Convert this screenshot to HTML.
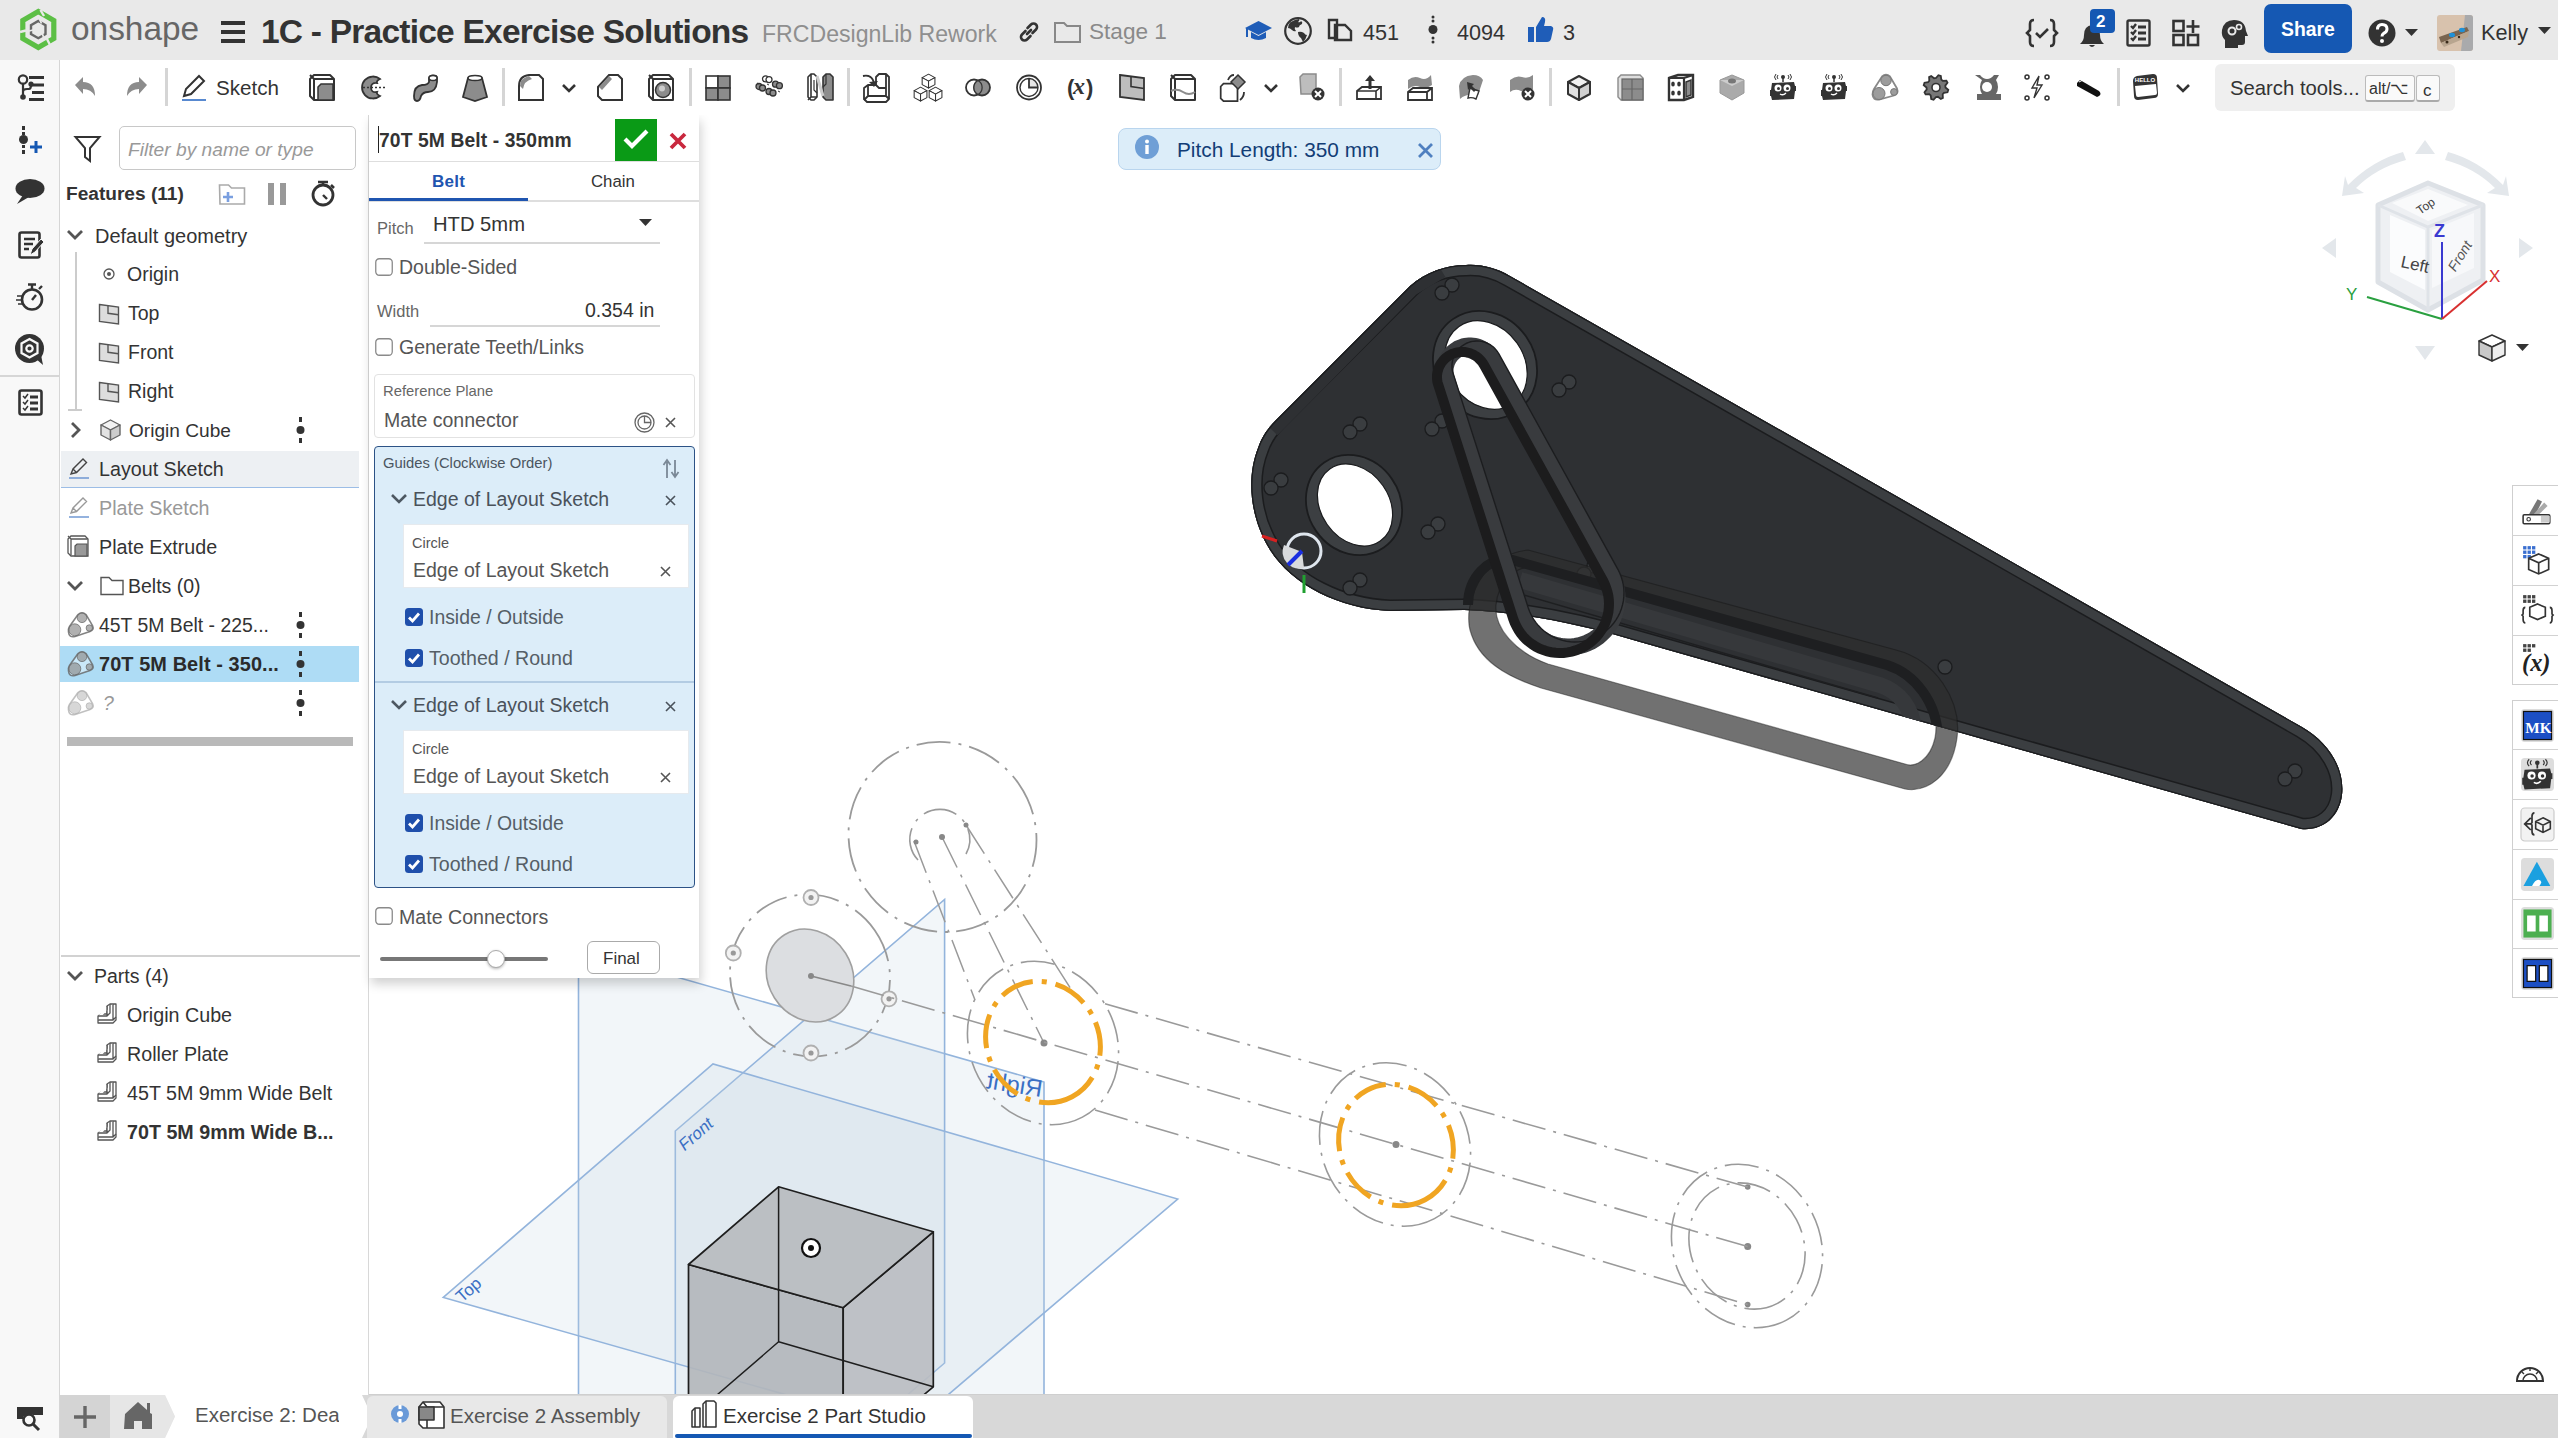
<!DOCTYPE html>
<html><head><meta charset="utf-8"><style>
*{box-sizing:border-box;margin:0;padding:0}
html,body{width:2558px;height:1438px;overflow:hidden;background:#fff;font-family:"Liberation Sans",sans-serif;color:#333}
.a{position:absolute}
.t{position:absolute;white-space:nowrap;line-height:1}
svg{position:absolute;overflow:visible}
</style></head><body>
<svg style="left:0;top:0" width="2558" height="1438" viewBox="0 0 2558 1438">
<defs><clipPath id="pc"><path d="M1466,265 C1482,264 1496,268 1510,276 L2302,727 C2330,743 2345,770 2342,795 C2339,818 2322,831 2301,829 L2000,744 L1640,642 C1580,624 1520,612 1464,610 L1390,611 C1340,609 1292,585 1270,550 C1250,518 1246,478 1258,448 C1262,436 1268,428 1276,420 L1410,286 C1426,272 1446,265 1466,265 Z"/></clipPath></defs>
<g stroke="#93b4dc" stroke-width="1.6" fill="rgba(196,212,228,0.22)"><path d="M578.5,949.0 L1044.0,1082.0 L1044.0,1600.0 L578.5,1600.0 Z"/><path d="M675.3,1131.0 L944.6,899.5 L944.6,1363.0 L675.3,1594.0 Z"/><path d="M443.3,1297.4 L713.0,1064.0 L1177.7,1199.0 L907.6,1429.3 Z"/></g>
<g fill="#3a6fc4" font-family="Liberation Sans" font-size="17"><text transform="translate(462,1303) rotate(-41)">Top</text><text transform="translate(684,1152) rotate(-41) skewX(-10)">Front</text><text transform="translate(1041,1097) scale(-1,1) rotate(-9)" font-size="24">Right</text></g>
<g stroke="#1e1e1e" stroke-width="1.7" stroke-linejoin="round"><path d="M688.5,1264.5 L843.2,1307.7 L843.2,1462.7 L688.5,1419.5 Z" fill="#b3b6ba" fill-opacity="0.9"/><path d="M843.2,1307.7 L933.3,1231.8 L933.3,1386.8 L843.2,1462.7 Z" fill="#babdc1" fill-opacity="0.9"/><path d="M778.6,1186.8 L933.3,1231.8 L843.2,1307.7 L688.5,1264.5 Z" fill="#b7babe" fill-opacity="0.9"/><path d="M778.6,1186.8 V1341.8 M688.5,1419.5 L778.6,1341.8 L933.3,1386.8" fill="none" stroke-width="1.5"/></g><circle cx="811" cy="1248" r="9" fill="#fff" stroke="#111" stroke-width="2.2"/><circle cx="811" cy="1248" r="3" fill="#111"/>
<g fill="none" stroke="#9a9a9a" stroke-width="1.8"><ellipse cx="942.5" cy="837" rx="93" ry="96" transform="rotate(-35 942.5 837)" stroke-dasharray="34 8 3 8"/><path d="M918,860 A30,30 0 1 1 966,854" stroke-dasharray="34 8 3 8" stroke-width="1.6"/><path d="M914,841 L975,1000 M942,837 L1044,1043 M966,825 L1078,1000" stroke-dasharray="34 8 3 8" stroke-width="1.5"/><ellipse cx="810" cy="975.5" rx="79" ry="82" transform="rotate(-35 810 975.5)" stroke-dasharray="34 8 3 8"/></g><ellipse cx="810" cy="975.5" rx="42" ry="48" transform="rotate(-32 810 975.5)" fill="#dcdee1" stroke="#a0a0a0" stroke-width="1.6"/><path d="M811,976 L851,986" stroke="#888" stroke-width="1.8"/><circle cx="811" cy="897.5" r="7.5" fill="#f2f2f2" stroke="#b0b0b0" stroke-width="1.8"/><circle cx="811" cy="897.5" r="2.6" fill="#999"/><circle cx="733.3" cy="953" r="7.5" fill="#f2f2f2" stroke="#b0b0b0" stroke-width="1.8"/><circle cx="733.3" cy="953" r="2.6" fill="#999"/><circle cx="889" cy="998.8" r="7.5" fill="#f2f2f2" stroke="#b0b0b0" stroke-width="1.8"/><circle cx="889" cy="998.8" r="2.6" fill="#999"/><circle cx="811" cy="1053" r="7.5" fill="#f2f2f2" stroke="#b0b0b0" stroke-width="1.8"/><circle cx="811" cy="1053" r="2.6" fill="#999"/><g fill="#888"><circle cx="811" cy="976" r="3"/><circle cx="942" cy="837" r="3"/><circle cx="916" cy="842" r="2.5"/><circle cx="966" cy="825" r="2.5"/><circle cx="1044" cy="1043" r="3.5"/><circle cx="1396" cy="1144.5" r="3.5"/><circle cx="1747.7" cy="1246.6" r="3.5"/><circle cx="1747.7" cy="1187" r="2.8"/><circle cx="1747.7" cy="1304.6" r="2.8"/></g><g fill="none" stroke="#9a9a9a" stroke-width="1.6"><path d="M851,986 L1747.7,1246.6" stroke-dasharray="34 8 3 8"/><path d="M1105,1003.8 L1747.7,1187" stroke-dasharray="34 8 3 8"/><path d="M1095,1110 L1747.7,1304.6" stroke-dasharray="34 8 3 8"/><ellipse cx="1043" cy="1043" rx="84" ry="73" transform="rotate(62 1043 1043)" stroke-dasharray="34 8 3 8"/><ellipse cx="1395" cy="1144.5" rx="84" ry="73" transform="rotate(62 1395 1144.5)" stroke-dasharray="34 8 3 8"/><ellipse cx="1747" cy="1246" rx="84" ry="73" transform="rotate(62 1747 1246)" stroke-dasharray="34 8 3 8"/><ellipse cx="1747" cy="1246" rx="65" ry="56" transform="rotate(62 1747 1246)" stroke-dasharray="34 8 3 8"/></g><g fill="none" stroke="#f0a522" stroke-width="5" stroke-dasharray="34 9 5 9"><ellipse cx="1043" cy="1042" rx="62" ry="56" transform="rotate(62 1043 1042)"/><ellipse cx="1396" cy="1145" rx="62" ry="56" transform="rotate(62 1396 1145)"/></g>
<g clip-path="url(#pc)"><path d="M1466,265 C1482,264 1496,268 1510,276 L2302,727 C2330,743 2345,770 2342,795 C2339,818 2322,831 2301,829 L2000,744 L1640,642 C1580,624 1520,612 1464,610 L1390,611 C1340,609 1292,585 1270,550 C1250,518 1246,478 1258,448 C1262,436 1268,428 1276,420 L1410,286 C1426,272 1446,265 1466,265 Z" fill="#2e3033"/><path d="M1466,265 C1482,264 1496,268 1510,276 L2302,727 C2330,743 2345,770 2342,795 C2339,818 2322,831 2301,829 L2000,744 L1640,642 C1580,624 1520,612 1464,610 L1390,611 C1340,609 1292,585 1270,550 C1250,518 1246,478 1258,448 C1262,436 1268,428 1276,420 L1410,286 C1426,272 1446,265 1466,265 Z" fill="none" stroke="#1b1c1e" stroke-width="23"/><path d="M1466,265 C1482,264 1496,268 1510,276 L2302,727 C2330,743 2345,770 2342,795 C2339,818 2322,831 2301,829 L2000,744 L1640,642 C1580,624 1520,612 1464,610 L1390,611 C1340,609 1292,585 1270,550 C1250,518 1246,478 1258,448 C1262,436 1268,428 1276,420 L1410,286 C1426,272 1446,265 1466,265 Z" fill="none" stroke="#3b3e41" stroke-width="20"/><path d="M1440,268 L1410,286 L1270,428" fill="none" stroke="#2e3033" stroke-width="21"/><path d="M1466,265 C1482,264 1496,268 1510,276 L2302,727 C2330,743 2345,770 2342,795 C2339,818 2322,831 2301,829 L2000,744 L1640,642 C1580,624 1520,612 1464,610 L1390,611 C1340,609 1292,585 1270,550 C1250,518 1246,478 1258,448 C1262,436 1268,428 1276,420 L1410,286 C1426,272 1446,265 1466,265 Z" fill="none" stroke="#1b1c1e" stroke-width="2.5"/></g><ellipse cx="1354" cy="505" rx="52" ry="46" transform="rotate(55 1354 505)" fill="#3c3f42" stroke="#1b1c1e" stroke-width="1.8"/><ellipse cx="1355" cy="505" rx="44" ry="34" transform="rotate(55 1355 505)" fill="#fff" stroke="#1b1c1e" stroke-width="1.2"/><ellipse cx="1485" cy="365" rx="56" ry="50" transform="rotate(55 1485 365)" fill="#3c3f42" stroke="#1b1c1e" stroke-width="1.8"/><ellipse cx="1486" cy="365" rx="47" ry="38" transform="rotate(55 1486 365)" fill="#fff" stroke="#1b1c1e" stroke-width="1.2"/><g fill="#3a3d40" stroke="#1b1c1e" stroke-width="1.3"><circle cx="1452" cy="285" r="7"/><circle cx="1442" cy="293" r="7"/></g><g fill="#3a3d40" stroke="#1b1c1e" stroke-width="1.3"><circle cx="1569" cy="382" r="7"/><circle cx="1559" cy="390" r="7"/></g><g fill="#3a3d40" stroke="#1b1c1e" stroke-width="1.3"><circle cx="1360" cy="424" r="7"/><circle cx="1350" cy="432" r="7"/></g><g fill="#3a3d40" stroke="#1b1c1e" stroke-width="1.3"><circle cx="1281" cy="480" r="7"/><circle cx="1271" cy="488" r="7"/></g><g fill="#3a3d40" stroke="#1b1c1e" stroke-width="1.3"><circle cx="1438" cy="524" r="7"/><circle cx="1428" cy="532" r="7"/></g><g fill="#3a3d40" stroke="#1b1c1e" stroke-width="1.3"><circle cx="1360" cy="580" r="7"/><circle cx="1350" cy="588" r="7"/></g><g fill="#3a3d40" stroke="#1b1c1e" stroke-width="1.3"><circle cx="1442" cy="421" r="7"/><circle cx="1432" cy="429" r="7"/></g><g fill="#3a3d40" stroke="#1b1c1e" stroke-width="1.3"><circle cx="2295" cy="771" r="7"/><circle cx="2285" cy="779" r="7"/></g><g fill="#3a3d40" stroke="#1b1c1e" stroke-width="1.3"><circle cx="1594" cy="566" r="7"/><circle cx="1584" cy="574" r="7"/></g><circle cx="1945" cy="667" r="7" fill="#3a3d40" stroke="#1b1c1e" stroke-width="1.3"/><circle cx="1304" cy="551" r="17" fill="#2e3033" stroke="#dfe6ee" stroke-width="3"/><path d="M1302,552 L1284,545 A17,17 0 0,0 1304,568 Z" fill="#d8dadc"/><path d="M1302,551 L1288,565" stroke="#1a2ee0" stroke-width="4"/><path d="M1262,536 l15,5" stroke="#d82020" stroke-width="3"/><path d="M1304,575 v18" stroke="#20a030" stroke-width="3"/><clipPath id="b2"><path d="M1528,550 L1896,650 C1935,660 1962,700 1957,738 C1952,775 1928,793 1905,789 L1541,688 C1505,676 1478,660 1470,630 C1464,606 1478,556 1528,550 Z M1535,568 L1892,666 C1925,676 1940,712 1935,738 C1930,760 1915,768 1905,764 L1548,664 C1515,652 1494,628 1496,605 C1498,583 1515,564 1535,568 Z" clip-rule="evenodd"/></clipPath><path d="M1528,550 L1896,650 C1935,660 1962,700 1957,738 C1952,775 1928,793 1905,789 L1541,688 C1505,676 1478,660 1470,630 C1464,606 1478,556 1528,550 Z M1535,568 L1892,666 C1925,676 1940,712 1935,738 C1930,760 1915,768 1905,764 L1548,664 C1515,652 1494,628 1496,605 C1498,583 1515,564 1535,568 Z" fill-rule="evenodd" fill="rgba(45,45,45,0.68)" stroke="rgba(20,20,20,0.45)" stroke-width="1.2"/><g clip-path="url(#pc)"><path d="M1468,605 C1468,578 1488,556 1512,560 L1887,665 C1915,674 1937,702 1938,738" fill="none" stroke="#1e1f21" stroke-width="10"/><path d="M1520,580 L1880,685 C1900,692 1912,708 1914,730" fill="none" stroke="#36383b" stroke-width="16"/><path d="M1510,591 L1878,698" fill="none" stroke="#1e1f21" stroke-width="1.4"/></g><path d="M1610.9,574.3 L1612.7,578.0 L1614.2,581.8 L1615.4,585.7 L1616.3,589.7 L1616.8,593.7 L1617.0,597.8 L1616.8,601.9 L1616.4,605.9 L1615.5,609.9 L1614.4,613.8 L1612.9,617.7 L1611.1,621.3 L1609.0,624.8 L1606.6,628.2 L1604.0,631.3 L1601.1,634.1 L1598.0,636.8 L1594.6,639.1 L1591.1,641.2 L1587.4,643.0 L1583.6,644.4 L1579.7,645.6 L1575.7,646.4 L1571.6,646.9 L1567.5,647.0 L1563.5,646.8 L1559.4,646.2 L1555.4,645.4 L1551.5,644.1 L1547.7,642.6 L1544.1,640.8 L1540.6,638.6 L1537.3,636.2 L1534.2,633.5 L1531.4,630.6 L1528.8,627.4 L1526.5,624.1 L1524.5,620.5 L1522.7,616.8 L1521.3,613.0 L1446.2,378.6 L1445.7,376.9 L1445.3,375.1 L1445.1,373.2 L1445.0,371.4 L1445.0,369.5 L1445.2,367.7 L1445.5,365.9 L1446.0,364.1 L1446.5,362.4 L1447.2,360.7 L1448.1,359.0 L1449.0,357.4 L1450.1,355.9 L1451.2,354.5 L1452.5,353.2 L1453.9,351.9 L1455.3,350.8 L1456.8,349.8 L1458.4,348.8 L1460.1,348.0 L1461.8,347.4 L1463.6,346.8 L1465.4,346.4 L1467.2,346.2 L1469.0,346.0 L1470.9,346.0 L1472.7,346.1 L1474.5,346.4 L1476.3,346.8 L1478.1,347.3 L1479.8,348.0 L1481.5,348.8 L1483.1,349.7 L1484.6,350.7 L1486.1,351.8 L1487.4,353.1 L1488.7,354.4 L1489.9,355.8 L1490.9,357.3 L1491.9,358.9 Z" fill="none" stroke="#393b3e" stroke-width="17"/><path d="M1617.9,569.3 L1619.7,573.0 L1621.2,576.8 L1622.4,580.7 L1623.3,584.7 L1623.8,588.7 L1624.0,592.8 L1623.8,596.9 L1623.4,600.9 L1622.5,604.9 L1621.4,608.8 L1619.9,612.7 L1618.1,616.3 L1616.0,619.8 L1613.6,623.2 L1611.0,626.3 L1608.1,629.1 L1605.0,631.8 L1601.6,634.1 L1598.1,636.2 L1594.4,638.0 L1590.6,639.4 L1586.7,640.6 L1582.7,641.4 L1578.6,641.9 L1574.5,642.0 L1570.5,641.8 L1566.4,641.2 L1562.4,640.4 L1558.5,639.1 L1554.7,637.6 L1551.1,635.8 L1547.6,633.6 L1544.3,631.2 L1541.2,628.5 L1538.4,625.6 L1535.8,622.4 L1533.5,619.1 L1531.5,615.5 L1529.7,611.8 L1528.3,608.0 L1453.2,373.6 L1452.7,371.9 L1452.3,370.1 L1452.1,368.2 L1452.0,366.4 L1452.0,364.5 L1452.2,362.7 L1452.5,360.9 L1453.0,359.1 L1453.5,357.4 L1454.2,355.7 L1455.1,354.0 L1456.0,352.4 L1457.1,350.9 L1458.2,349.5 L1459.5,348.2 L1460.9,346.9 L1462.3,345.8 L1463.8,344.8 L1465.4,343.8 L1467.1,343.0 L1468.8,342.4 L1470.6,341.8 L1472.4,341.4 L1474.2,341.2 L1476.0,341.0 L1477.9,341.0 L1479.7,341.1 L1481.5,341.4 L1483.3,341.8 L1485.1,342.3 L1486.8,343.0 L1488.5,343.8 L1490.1,344.7 L1491.6,345.7 L1493.1,346.8 L1494.4,348.1 L1495.7,349.4 L1496.9,350.8 L1497.9,352.3 L1498.9,353.9 Z" fill="none" stroke="#1c1d1f" stroke-width="1.4"/><path d="M1602.9,580.3 L1604.7,584.0 L1606.2,587.8 L1607.4,591.7 L1608.3,595.7 L1608.8,599.7 L1609.0,603.8 L1608.8,607.9 L1608.4,611.9 L1607.5,615.9 L1606.4,619.8 L1604.9,623.7 L1603.1,627.3 L1601.0,630.8 L1598.6,634.2 L1596.0,637.3 L1593.1,640.1 L1590.0,642.8 L1586.6,645.1 L1583.1,647.2 L1579.4,649.0 L1575.6,650.4 L1571.7,651.6 L1567.7,652.4 L1563.6,652.9 L1559.5,653.0 L1555.5,652.8 L1551.4,652.2 L1547.4,651.4 L1543.5,650.1 L1539.7,648.6 L1536.1,646.8 L1532.6,644.6 L1529.3,642.2 L1526.2,639.5 L1523.4,636.6 L1520.8,633.4 L1518.5,630.1 L1516.5,626.5 L1514.7,622.8 L1513.3,619.0 L1438.2,384.6 L1437.7,382.9 L1437.3,381.1 L1437.1,379.2 L1437.0,377.4 L1437.0,375.5 L1437.2,373.7 L1437.5,371.9 L1438.0,370.1 L1438.5,368.4 L1439.2,366.7 L1440.1,365.0 L1441.0,363.4 L1442.1,361.9 L1443.2,360.5 L1444.5,359.2 L1445.9,357.9 L1447.3,356.8 L1448.8,355.8 L1450.4,354.8 L1452.1,354.0 L1453.8,353.4 L1455.6,352.8 L1457.4,352.4 L1459.2,352.2 L1461.0,352.0 L1462.9,352.0 L1464.7,352.1 L1466.5,352.4 L1468.3,352.8 L1470.1,353.3 L1471.8,354.0 L1473.5,354.8 L1475.1,355.7 L1476.6,356.7 L1478.1,357.8 L1479.4,359.1 L1480.7,360.4 L1481.9,361.8 L1482.9,363.3 L1483.9,364.9 Z" fill="none" stroke="#1c1c1d" stroke-width="10"/></svg>
<svg style="left:2320px;top:135px;" width="220" height="230" viewBox="0 0 220 230"><g fill="#e3e7eb"><path d="M105 5 l10 14 h-20z"/><path d="M105 225 l10 -14 h-20z" /><path d="M2 113 l14 -10 v20z"/><path d="M213 113 l-14 -10 v20z"/><path d="M28 50 q25 -25 55 -33 l3 8 q-30 8 -50 28 l8 5 l-22 3 l3 -20z"/><path d="M183 50 q-25 -25 -55 -33 l-3 8 q30 8 50 28 l-8 5 l22 3 l-3 -20z"/></g><g fill="#eef0f3" stroke="#dde1e6" stroke-width="5" stroke-linejoin="round"><path d="M58 70 l50 -22 l55 22 v75 l-55 30 l-50 -28z"/></g><path d="M58 70 l50 22 l55 -22 M108 92 v83" fill="none" stroke="#dfe3e8" stroke-width="3"/><path d="M70 80 l35 15 v60 l-35 -18z" fill="#fbfcfd"/><path d="M112 95 l42 -17 v55 l-42 20z" fill="#f7f8fa"/><path d="M72 68 l36 -14 l40 16 l-40 16z" fill="#f9fafb"/><g font-family="Liberation Sans" fill="#444"><text transform="translate(80,132) rotate(12)" font-size="17">Left</text><text transform="translate(135,138) rotate(-58) skewX(-10)" font-size="14" fill="#555">Front</text><text transform="translate(100,80) rotate(-35)" font-size="12">Top</text></g><path d="M122 184 L122 107" stroke="#3a3ad0" stroke-width="2"/><text x="114" y="102" font-family="Liberation Sans" font-size="18" font-weight="700" fill="#3a3ad0">Z</text><path d="M122 184 L47 162" stroke="#2aa040" stroke-width="2"/><text x="26" y="165" font-family="Liberation Sans" font-size="17" fill="#2aa040">Y</text><path d="M122 184 L167 146" stroke="#d83030" stroke-width="2"/><text x="169" y="147" font-family="Liberation Sans" font-size="17" fill="#d83030">X</text></svg>
<svg style="left:2478px;top:334px;" width="28" height="28" viewBox="0 0 28 28"><g stroke="#333" stroke-width="1.4" stroke-linejoin="round"><polygon points="14,1 27,7 14,13 1,7" fill="#fff"/><polygon points="1,7 14,13 14,27 1,21" fill="#c8c8c8"/><polygon points="14,13 27,7 27,21 14,27" fill="#eee"/></g></svg>
<svg style="left:2516px;top:344px;" width="13" height="7" viewBox="0 0 13 7"><path d="M0 0 h13 l-6.5 7z" fill="#333"/></svg>
<div class="a" style="left:2512px;top:485px;width:46px;height:200px;background:#fff;border:1.3px solid #cfcfcf;border-right:none"></div>
<div class="a" style="left:2512px;top:535px;width:46px;height:1.2px;background:#d2d2d2"></div>
<div class="a" style="left:2512px;top:585px;width:46px;height:1.2px;background:#d2d2d2"></div>
<div class="a" style="left:2512px;top:635px;width:46px;height:1.2px;background:#d2d2d2"></div>
<div class="a" style="left:2512px;top:700px;width:46px;height:298px;background:#fff;border:1.3px solid #cfcfcf;border-right:none"></div>
<div class="a" style="left:2512px;top:749px;width:46px;height:1.2px;background:#d2d2d2"></div>
<div class="a" style="left:2512px;top:799px;width:46px;height:1.2px;background:#d2d2d2"></div>
<div class="a" style="left:2512px;top:849px;width:46px;height:1.2px;background:#d2d2d2"></div>
<div class="a" style="left:2512px;top:899px;width:46px;height:1.2px;background:#d2d2d2"></div>
<div class="a" style="left:2512px;top:948px;width:46px;height:1.2px;background:#d2d2d2"></div>
<svg style="left:2522.0px;top:497.0px" width="30" height="30" viewBox="0 0 27 27"><path d="M6 16 l8 -14 l4 2 l-6 12z" fill="#777"/><path d="M10 16 l10 -11 l3 3 l-8 8z" fill="#aaa"/><rect x="1" y="16" width="24" height="8" rx="1" fill="#fff" stroke="#333" stroke-width="1.4"/><circle cx="6" cy="20" r="1.6" fill="none" stroke="#333"/><rect x="17" y="17" width="8" height="6" fill="#ccc"/></svg><svg style="left:2522.0px;top:545.0px" width="30" height="30" viewBox="0 0 27 27"><g fill="#3a6fd0"><rect x="1" y="1" width="3" height="3"/><rect x="5" y="1" width="3" height="3"/><rect x="9" y="1" width="3" height="3"/><rect x="1" y="5" width="3" height="3"/><rect x="5" y="5" width="3" height="3"/><rect x="9" y="5" width="3" height="3"/><rect x="1" y="9" width="3" height="3"/><rect x="5" y="9" width="3" height="3"/></g><g fill="none" stroke="#333" stroke-width="1.5"><path d="M15 8 l9 4 v10 l-9 4 l-9 -4 v-10z M6 12 l9 4 l9 -4 M15 16 v10"/></g></svg><svg style="left:2522.0px;top:594.0px" width="30" height="30" viewBox="0 0 27 27"><g fill="#444"><rect x="1" y="1" width="3" height="3"/><rect x="5" y="1" width="3" height="3"/><rect x="9" y="1" width="3" height="3"/><rect x="1" y="5" width="3" height="3"/><rect x="5" y="5" width="3" height="3"/><rect x="9" y="5" width="3" height="3"/></g><g fill="none" stroke="#333" stroke-width="1.5"><path d="M14 9 l7 3 v8 l-7 3 l-7 -3 v-8z"/><path d="M3 12 q-2 0 -2 3 v3 l-1 1 l1 1 v3 q0 3 2 3 M25 12 q2 0 2 3 v3 l1 1 l-1 1 v3 q0 3 -2 3"/></g></svg><svg style="left:2522.0px;top:643.0px" width="30" height="30" viewBox="0 0 27 27"><g fill="#444"><rect x="1" y="1" width="3" height="3"/><rect x="5" y="1" width="3" height="3"/><rect x="9" y="1" width="3" height="3"/><rect x="1" y="5" width="3" height="3"/><rect x="5" y="5" width="3" height="3"/></g><text x="0" y="25" font-family="Liberation Serif" font-style="italic" font-weight="700" font-size="22" fill="#222">(x)</text></svg><svg style="left:2520.5px;top:708.5px" width="33" height="33" viewBox="0 0 27 27"><rect x="0" y="0" width="27" height="27" rx="3" fill="#ddd"/><rect x="2" y="2" width="23" height="23" fill="#1c4fc4" stroke="#111" stroke-width="1"/><text x="3.5" y="20" font-family="Liberation Serif" font-weight="700" font-size="12.5" fill="#fff">MK</text></svg><svg style="left:2520.5px;top:757.5px" width="33" height="33" viewBox="0 0 27 27"><rect x="0" y="0" width="27" height="27" rx="3" fill="#ddd"/><g transform="translate(1,1) scale(0.95)"><g><path d="M8 1 q-2 2 0 4 M18 1 q2 2 0 4 M6 0 q-3 3 0 6 M20 0 q3 3 0 6" fill="none" stroke="#333" stroke-width="1"/><circle cx="13" cy="3" r="2" fill="#333"/><path d="M13 3 v5" stroke="#333" stroke-width="1.5"/><path d="M2 9 l22 -1 l1 4 h1 v5 h-1 l-1 8 l-22 1 l-1 -4 h-1 v-6 h1z" fill="#333"/><circle cx="8" cy="14" r="3.5" fill="#fff"/><circle cx="17" cy="14" r="3.5" fill="#fff"/><circle cx="8.5" cy="14.5" r="1.5" fill="#333"/><circle cx="17.5" cy="14.5" r="1.5" fill="#333"/><path d="M10 20 q3 2 6 -1" stroke="#fff" stroke-width="1.4" fill="none"/></g></g></svg><svg style="left:2520.5px;top:807.5px" width="33" height="33" viewBox="0 0 27 27"><rect x="0" y="0" width="27" height="27" rx="3" fill="#f2f2f2" stroke="#ccc"/><path d="M8 8 l-5 5 l5 5 M3 13 h6 M11 4 q-2 0 -2 3 v5 l-1 1 l1 1 v5 q0 3 2 3" fill="none" stroke="#333" stroke-width="1.4"/><path d="M18 8 l6 3 v6 l-6 3 l-6 -3 v-6z M12 11 l6 3 l6 -3 M18 14 v6" fill="none" stroke="#333" stroke-width="1.3"/></svg><svg style="left:2520.5px;top:857.5px" width="33" height="33" viewBox="0 0 27 27"><rect x="0" y="0" width="27" height="27" rx="3" fill="#ddd"/><path d="M13 3 l11 20 h-22z" fill="#1ba0e0"/><path d="M9 23 q3 -6 6 -5 q3 1 0 5z" fill="#fff"/></svg><svg style="left:2520.5px;top:906.5px" width="33" height="33" viewBox="0 0 27 27"><rect x="0" y="0" width="27" height="27" rx="3" fill="#ddd"/><rect x="2" y="2" width="23" height="23" fill="#4caf50"/><path d="M5 7 h7 v13 h-7z M15 7 h7 v13 h-7z" fill="#fff"/></svg><svg style="left:2520.5px;top:956.5px" width="33" height="33" viewBox="0 0 27 27"><rect x="0" y="0" width="27" height="27" rx="3" fill="#ddd"/><rect x="2" y="2" width="23" height="23" fill="#1c4fc4" stroke="#111"/><path d="M5 7 h7 v13 h-7z M15 7 h7 v13 h-7z" fill="#fff" stroke="#111" stroke-width="1"/></svg><svg style="left:2515px;top:1363px;" width="30" height="20" viewBox="0 0 30 20"><path d="M2 18 a13 13 0 0 1 26 0z" fill="none" stroke="#333" stroke-width="2"/><path d="M8 18 a7 7 0 0 1 14 0" fill="none" stroke="#333" stroke-width="1.6"/><path d="M15 5 v3 M7 9 l2 2 M23 9 l-2 2" stroke="#333" stroke-width="1.4"/></svg>
<div class="a" style="left:1118px;top:128px;width:323px;height:42px;background:#dcedf9;border:1.3px solid #b9d5ee;border-radius:8px"></div>
<svg style="left:1135px;top:135px;" width="24" height="24" viewBox="0 0 24 24"><circle cx="12" cy="12" r="12" fill="#6f9fd6"/><circle cx="12" cy="6.5" r="2" fill="#fff"/><rect x="10.3" y="10" width="3.4" height="9" fill="#fff"/></svg>
<div class="t" style="left:1177.0px;top:140.0px;font-size:20.8px;font-weight:400;color:#123d76;font-style:normal;">Pitch Length: 350 mm</div>
<svg style="left:1418px;top:143px;" width="15" height="15" viewBox="0 0 15 15"><path d="M1 1 L14 14 M14 1 L1 14" stroke="#4f80c0" stroke-width="2.8"/></svg>
<div class="a" style="left:60px;top:1394px;width:2498px;height:44px;background:#d8d8d8;border-top:1px solid #cfcfcf"></div>
<div class="a" style="left:60px;top:1395px;width:50px;height:43px;background:#d4d4d4"></div>
<svg style="left:73px;top:1405px;" width="24" height="24" viewBox="0 0 24 24"><path d="M12 1 v22 M1 12 h22" stroke="#666" stroke-width="3.4"/></svg>
<svg style="left:110px;top:1395px;" width="260" height="43" viewBox="0 0 260 43"><path d="M0 0 h55 l10 21.5 l-10 21.5 h-55z" fill="#e6e6e6"/><path d="M55 0 h197 l10 21.5 l-10 21.5 h-197 l10 -21.5z" fill="#fff"/></svg>
<svg style="left:124px;top:1400px;" width="28" height="28" viewBox="0 0 28 28"><path d="M1 14 l13 -12 l9 8 v-7 h3 v10 l2 1 v15 h-10 v-8 h-8 v8 h-10z" fill="#666"/></svg>
<div class="t" style="left:195.0px;top:1405.1px;font-size:20.5px;font-weight:400;color:#555;font-style:normal;width:144px;overflow:hidden">Exercise 2: Dear</div>
<div class="a" style="left:367px;top:1396px;width:300px;height:42px;background:#e8e8e8;border-radius:6px 6px 0 0"></div>
<svg style="left:390px;top:1404px;" width="20" height="20" viewBox="0 0 20 20"><circle cx="10" cy="10" r="9" fill="#6a9ad8"/><circle cx="10" cy="10" r="3" fill="#fff"/><rect x="8.5" y="1" width="3" height="4" fill="#fff"/><rect x="8.5" y="15" width="3" height="4" fill="#fff"/></svg>
<svg style="left:417px;top:1401px;" width="28" height="28" viewBox="0 0 28 28"><g stroke="#333" stroke-width="1.6" stroke-linejoin="round"><path d="M2 6 l4 -5 h17 l4 5 v21 h-21 l-4 -4z" fill="#fff"/><path d="M6 1 l4 5 h17 M10 6 v21" fill="none"/><path d="M2 6 h15 v13 h-15z" fill="#888"/></g></svg>
<div class="t" style="left:450.0px;top:1406.1px;font-size:20.6px;font-weight:400;color:#555;font-style:normal;">Exercise 2 Assembly</div>
<div class="a" style="left:673px;top:1396px;width:300px;height:42px;background:#fff;border-radius:6px 6px 0 0"></div>
<div class="a" style="left:675px;top:1434px;width:297px;height:4px;background:#1558b3;border-radius:2px"></div>
<svg style="left:691px;top:1400px;" width="26" height="28" viewBox="0 0 26 28"><g fill="#fff" stroke="#333" stroke-width="1.5" stroke-linejoin="round"><path d="M1 11 l3 -3 h5 v19 h-8z"/><path d="M4 8 v19"/><path d="M12 4 l3 -3 h8 l2 2 v24 h-13z"/><path d="M15 1 v26"/></g></svg>
<div class="t" style="left:723.0px;top:1406.1px;font-size:20.5px;font-weight:400;color:#333;font-style:normal;">Exercise 2 Part Studio</div>
<div class="a" style="left:60px;top:114px;width:309px;height:1281px;background:#fff;border-right:1.5px solid #d8d8d8;border-top:1.5px solid #d6d6d6"></div>
<svg style="left:74px;top:135px;" width="27" height="28" viewBox="0 0 27 28"><path d="M1.5 2 h24 l-9.5 11 v13 l-5 -4 v-9z" fill="none" stroke="#333" stroke-width="2"/></svg>
<div class="a" style="left:119px;top:126px;width:237px;height:44px;border:1.5px solid #c8c8c8;border-radius:5px;background:#fff"></div>
<div class="t" style="left:128.0px;top:139.7px;font-size:19.2px;font-weight:400;color:#999;font-style:italic;">Filter by name or type</div>
<div class="t" style="left:66.0px;top:183.8px;font-size:19.1px;font-weight:700;color:#333;font-style:normal;">Features (11)</div>
<svg style="left:218px;top:183px;" width="29" height="23" viewBox="0 0 29 23"><path d="M1.5 2 h9 l3 3 h13 v16 h-24.5z" fill="none" stroke="#aaa" stroke-width="1.6"/><path d="M10 9 v10 M5 14 h10" stroke="#7a9fe0" stroke-width="2.6"/></svg>
<div class="a" style="left:268px;top:183px;width:6px;height:22px;background:#999"></div>
<div class="a" style="left:280px;top:183px;width:6px;height:22px;background:#999"></div>
<svg style="left:310px;top:180px;" width="26" height="27" viewBox="0 0 26 27"><circle cx="13" cy="15" r="10" fill="none" stroke="#333" stroke-width="2.8"/><path d="M8 2 h10 M13 2 v3 M21 5 l3 3" stroke="#333" stroke-width="2.6"/><path d="M13 15 l4 4" stroke="#333" stroke-width="2.4"/></svg>
<svg style="left:66px;top:229px;" width="18" height="11" viewBox="0 0 18 11"><path d="M2 2 l7 7 l7 -7" fill="none" stroke="#555" stroke-width="2.8"/></svg>
<div class="t" style="left:95.0px;top:225.9px;font-size:20px;font-weight:400;color:#333;font-style:normal;">Default geometry</div>
<div class="a" style="left:75px;top:252px;width:1.5px;height:158px;background:#ccc"></div>
<div class="a" style="left:68px;top:409px;width:14px;height:1.5px;background:#ccc"></div>
<svg style="left:103px;top:268px;" width="12" height="12" viewBox="0 0 12 12"><circle cx="6" cy="6" r="5" fill="none" stroke="#555" stroke-width="1.3"/><circle cx="6" cy="6" r="2" fill="#555"/></svg>
<div class="t" style="left:127.0px;top:265.1px;font-size:19.5px;font-weight:400;color:#333;font-style:normal;">Origin</div>
<svg style="left:98px;top:302.5px;" width="22" height="22" viewBox="0 0 22 22"><path d="M1.5 1.5 l19 2.5 v17 l-19 -2.5z" fill="#ddd" stroke="#555" stroke-width="1.4"/><path d="M10 2.8 v7.5 l10.5 1.4" fill="none" stroke="#555" stroke-width="1.4"/></svg>
<div class="t" style="left:128.0px;top:304.1px;font-size:19.5px;font-weight:400;color:#333;font-style:normal;">Top</div>
<svg style="left:98px;top:341.5px;" width="22" height="22" viewBox="0 0 22 22"><path d="M1.5 1.5 l19 2.5 v17 l-19 -2.5z" fill="#ddd" stroke="#555" stroke-width="1.4"/><path d="M10 2.8 v7.5 l10.5 1.4" fill="none" stroke="#555" stroke-width="1.4"/></svg>
<div class="t" style="left:128.0px;top:343.1px;font-size:19.5px;font-weight:400;color:#333;font-style:normal;">Front</div>
<svg style="left:98px;top:380.5px;" width="22" height="22" viewBox="0 0 22 22"><path d="M1.5 1.5 l19 2.5 v17 l-19 -2.5z" fill="#ddd" stroke="#555" stroke-width="1.4"/><path d="M10 2.8 v7.5 l10.5 1.4" fill="none" stroke="#555" stroke-width="1.4"/></svg>
<div class="t" style="left:128.0px;top:382.1px;font-size:19.5px;font-weight:400;color:#333;font-style:normal;">Right</div>
<svg style="left:70px;top:421px;" width="11" height="18" viewBox="0 0 11 18"><path d="M2 2 l7 7 l-7 7" fill="none" stroke="#555" stroke-width="2.8"/></svg>
<svg style="left:100px;top:419px;" width="21" height="22" viewBox="0 0 21 22"><g stroke="#666" stroke-width="1.4" stroke-linejoin="round"><polygon points="10.5,1 20,6 10.5,11 1,6" fill="#f2f2f2"/><polygon points="1,6 10.5,11 10.5,21 1,16" fill="#e2e2e2"/><polygon points="10.5,11 20,6 20,16 10.5,21" fill="#ccc"/></g></svg>
<div class="t" style="left:129.0px;top:421.3px;font-size:19.1px;font-weight:400;color:#333;font-style:normal;">Origin Cube</div>
<svg style="left:297px;top:417px;" width="7" height="26" viewBox="0 0 7 26"><g fill="#333"><rect x="2" y="0" width="3" height="5"/><circle cx="3.5" cy="13" r="4"/><rect x="2" y="21" width="3" height="5"/></g></svg>
<div class="a" style="left:61px;top:451px;width:298px;height:37px;background:#edf0f3;border-bottom:1.5px solid #9cbde6"></div>
<svg style="left:68px;top:457px;" width="22" height="22" viewBox="0 0 22 22"><path d="M3 17 l2 -5 l10 -10 l3.5 3.5 l-10 10z M5 12 l3.5 3.5" fill="none" stroke="#444" stroke-width="1.4"/><path d="M1 21 h20" stroke="#5a88cc" stroke-width="1.3"/></svg>
<div class="t" style="left:99.0px;top:460.0px;font-size:19.7px;font-weight:400;color:#333;font-style:normal;">Layout Sketch</div>
<svg style="left:68px;top:496px;" width="22" height="22" viewBox="0 0 22 22"><path d="M3 17 l2 -5 l10 -10 l3.5 3.5 l-10 10z M5 12 l3.5 3.5" fill="none" stroke="#999" stroke-width="1.4"/><path d="M1 21 h20" stroke="#5a88cc" stroke-width="1.3"/></svg>
<div class="t" style="left:99.0px;top:499.0px;font-size:19.7px;font-weight:400;color:#999;font-style:normal;">Plate Sketch</div>
<svg style="left:67px;top:535px;" width="22" height="22" viewBox="0 0 22 22"><g stroke="#555" stroke-width="1.3" fill="#fff"><path d="M1 4 l3 -3 h14 l3 3 v17 h-17 l-3 -3z"/><path d="M4 21 v-17 h17 M4 4 l-3 -3"/></g><path d="M8 11 l2 -2 h10 v12 h-12z" fill="#999" stroke="#555" stroke-width="1.2"/></svg>
<div class="t" style="left:99.0px;top:538.0px;font-size:19.7px;font-weight:400;color:#333;font-style:normal;">Plate Extrude</div>
<svg style="left:66px;top:580px;" width="18" height="11" viewBox="0 0 18 11"><path d="M2 2 l7 7 l7 -7" fill="none" stroke="#555" stroke-width="2.8"/></svg>
<svg style="left:100px;top:576px;" width="24" height="20" viewBox="0 0 24 20"><path d="M1 1.5 h8 l3 3 h11 v14 h-22z" fill="none" stroke="#555" stroke-width="1.4"/></svg>
<div class="t" style="left:128.0px;top:577.1px;font-size:19.5px;font-weight:400;color:#333;font-style:normal;">Belts (0)</div>
<svg style="left:68px;top:611.5px;" width="25" height="25" viewBox="0 0 25 25"><g opacity="1"><path d="M10 2.5 q4 -3.5 8 0 l6.5 11 q2 4.5 -2.5 6 l-15 5 q-6 1.5 -6.5 -4.5 q-0.5 -3 1 -5.5z" fill="rgba(255,255,255,0.35)" stroke="rgba(100,100,100,0.8)" stroke-width="1.6"/><circle cx="14" cy="5.8" r="4.8" fill="rgba(140,140,140,0.68)" stroke="rgba(100,100,100,0.7)" stroke-width="1"/><circle cx="6.8" cy="17.8" r="6" fill="rgba(140,140,140,0.68)" stroke="rgba(100,100,100,0.7)" stroke-width="1"/><circle cx="21.3" cy="16" r="3.2" fill="rgba(140,140,140,0.68)" stroke="rgba(100,100,100,0.7)" stroke-width="1"/></g></svg>
<div class="t" style="left:99.0px;top:616.1px;font-size:19.4px;font-weight:400;color:#333;font-style:normal;">45T 5M Belt - 225...</div>
<svg style="left:297px;top:612px;" width="7" height="26" viewBox="0 0 7 26"><g fill="#333"><rect x="2" y="0" width="3" height="5"/><circle cx="3.5" cy="13" r="4"/><rect x="2" y="21" width="3" height="5"/></g></svg>
<div class="a" style="left:60px;top:646px;width:299px;height:36px;background:#aedcf5"></div>
<svg style="left:68px;top:650.5px;" width="25" height="25" viewBox="0 0 25 25"><g opacity="1"><path d="M10 2.5 q4 -3.5 8 0 l6.5 11 q2 4.5 -2.5 6 l-15 5 q-6 1.5 -6.5 -4.5 q-0.5 -3 1 -5.5z" fill="rgba(255,255,255,0.35)" stroke="rgba(100,100,100,0.8)" stroke-width="1.6"/><circle cx="14" cy="5.8" r="4.8" fill="rgba(140,140,140,0.68)" stroke="rgba(100,100,100,0.7)" stroke-width="1"/><circle cx="6.8" cy="17.8" r="6" fill="rgba(140,140,140,0.68)" stroke="rgba(100,100,100,0.7)" stroke-width="1"/><circle cx="21.3" cy="16" r="3.2" fill="rgba(140,140,140,0.68)" stroke="rgba(100,100,100,0.7)" stroke-width="1"/></g></svg>
<div class="t" style="left:99.0px;top:654.9px;font-size:19.9px;font-weight:700;color:#2b2b2b;font-style:normal;letter-spacing:0.1px">70T 5M Belt - 350...</div>
<svg style="left:297px;top:651px;" width="7" height="26" viewBox="0 0 7 26"><g fill="#333"><rect x="2" y="0" width="3" height="5"/><circle cx="3.5" cy="13" r="4"/><rect x="2" y="21" width="3" height="5"/></g></svg>
<svg style="left:68px;top:689.5px;" width="25" height="25" viewBox="0 0 25 25"><g opacity="0.5"><path d="M10 2.5 q4 -3.5 8 0 l6.5 11 q2 4.5 -2.5 6 l-15 5 q-6 1.5 -6.5 -4.5 q-0.5 -3 1 -5.5z" fill="rgba(255,255,255,0.35)" stroke="rgba(100,100,100,0.8)" stroke-width="1.6"/><circle cx="14" cy="5.8" r="4.8" fill="rgba(140,140,140,0.68)" stroke="rgba(100,100,100,0.7)" stroke-width="1"/><circle cx="6.8" cy="17.8" r="6" fill="rgba(140,140,140,0.68)" stroke="rgba(100,100,100,0.7)" stroke-width="1"/><circle cx="21.3" cy="16" r="3.2" fill="rgba(140,140,140,0.68)" stroke="rgba(100,100,100,0.7)" stroke-width="1"/></g></svg>
<div class="t" style="left:103.0px;top:694.1px;font-size:19.5px;font-weight:400;color:#999;font-style:italic;">?</div>
<svg style="left:297px;top:690px;" width="7" height="26" viewBox="0 0 7 26"><g fill="#333"><rect x="2" y="0" width="3" height="5"/><circle cx="3.5" cy="13" r="4"/><rect x="2" y="21" width="3" height="5"/></g></svg>
<div class="a" style="left:67px;top:737px;width:286px;height:9px;background:#b9b9b9"></div>
<div class="a" style="left:61px;top:955px;width:299px;height:1.5px;background:#d2d2d2"></div>
<svg style="left:66px;top:970px;" width="18" height="11" viewBox="0 0 18 11"><path d="M2 2 l7 7 l7 -7" fill="none" stroke="#555" stroke-width="2.8"/></svg>
<div class="t" style="left:94.0px;top:967.1px;font-size:19.5px;font-weight:400;color:#333;font-style:normal;">Parts (4)</div>
<svg style="left:96px;top:1003.5px;" width="24" height="24" viewBox="0 0 24 24"><g fill="#fff" stroke="#555" stroke-width="1.3" stroke-linejoin="round"><path d="M2 12 l3 -2 h6 v-8 l3 -2 h6 v16 l-3 3 h-15z"/><path d="M2 12 h9 v-10 M11 12 l3 -3 v-9 M17 0 v16 h-15 M17 16 l3 -3"/></g></svg>
<div class="t" style="left:127.0px;top:1006.0px;font-size:19.7px;font-weight:400;color:#333;font-style:normal;">Origin Cube</div>
<svg style="left:96px;top:1042.5px;" width="24" height="24" viewBox="0 0 24 24"><g fill="#fff" stroke="#555" stroke-width="1.3" stroke-linejoin="round"><path d="M2 12 l3 -2 h6 v-8 l3 -2 h6 v16 l-3 3 h-15z"/><path d="M2 12 h9 v-10 M11 12 l3 -3 v-9 M17 0 v16 h-15 M17 16 l3 -3"/></g></svg>
<div class="t" style="left:127.0px;top:1045.0px;font-size:19.7px;font-weight:400;color:#333;font-style:normal;">Roller Plate</div>
<svg style="left:96px;top:1081.5px;" width="24" height="24" viewBox="0 0 24 24"><g fill="#fff" stroke="#555" stroke-width="1.3" stroke-linejoin="round"><path d="M2 12 l3 -2 h6 v-8 l3 -2 h6 v16 l-3 3 h-15z"/><path d="M2 12 h9 v-10 M11 12 l3 -3 v-9 M17 0 v16 h-15 M17 16 l3 -3"/></g></svg>
<div class="t" style="left:127.0px;top:1084.0px;font-size:19.7px;font-weight:400;color:#333;font-style:normal;">45T 5M 9mm Wide Belt</div>
<svg style="left:96px;top:1120.5px;" width="24" height="24" viewBox="0 0 24 24"><g fill="#fff" stroke="#555" stroke-width="1.3" stroke-linejoin="round"><path d="M2 12 l3 -2 h6 v-8 l3 -2 h6 v16 l-3 3 h-15z"/><path d="M2 12 h9 v-10 M11 12 l3 -3 v-9 M17 0 v16 h-15 M17 16 l3 -3"/></g></svg>
<div class="t" style="left:127.0px;top:1123.0px;font-size:19.7px;font-weight:700;color:#333;font-style:normal;letter-spacing:0px">70T 5M 9mm Wide B...</div>
<div class="a" style="left:0px;top:60px;width:60px;height:1378px;background:#f8f8f8;border-right:1.5px solid #d6d6d6"></div>
<div class="a" style="left:0px;top:375px;width:59px;height:1.5px;background:#d6d6d6"></div>
<svg style="left:17px;top:74px;" width="27" height="27" viewBox="0 0 27 27"><circle cx="6" cy="5.5" r="4.2" fill="none" stroke="#333" stroke-width="2.2"/><path d="M6 10 v13 M6 18 q0 -3 4 -3 h2 q2 0 2 -4" fill="none" stroke="#333" stroke-width="2.2"/><circle cx="14" cy="10" r="2.6" fill="#333"/><circle cx="6" cy="23" r="2.8" fill="#333"/><rect x="12" y="2" width="15" height="3" fill="#333"/><rect x="15" y="9.5" width="12" height="3" fill="#333"/><rect x="15" y="17" width="12" height="3" fill="#333"/><rect x="12" y="24" width="15" height="3" fill="#333"/></svg>
<svg style="left:19px;top:126px;" width="25" height="28" viewBox="0 0 25 28"><g fill="#333"><rect x="3" y="0" width="3" height="4"/><rect x="3" y="6" width="3" height="3"/><circle cx="4.5" cy="13.5" r="4.5"/><rect x="3" y="19" width="3" height="3"/><rect x="3" y="24" width="3" height="4"/></g><path d="M17 15 v12 M11 21 h12" stroke="#1558b3" stroke-width="3"/></svg>
<svg style="left:15px;top:179px;" width="30" height="25" viewBox="0 0 30 25"><ellipse cx="15" cy="9.5" rx="14.5" ry="9.5" fill="#333"/><path d="M8 16 l-6 9 l12 -7z" fill="#333"/></svg>
<svg style="left:18px;top:231px;" width="26" height="28" viewBox="0 0 26 28"><rect x="1.5" y="1.5" width="20" height="25" rx="2" fill="none" stroke="#333" stroke-width="2.6"/><path d="M6 8 h11 M6 13 h9 M6 18 h5" stroke="#333" stroke-width="2.4"/><path d="M12 24 l2 -6 l9 -10 l3 3 l-9 10z" fill="#333" stroke="#f8f8f8" stroke-width="1"/></svg>
<svg style="left:16px;top:283px;" width="28" height="28" viewBox="0 0 28 28"><circle cx="16" cy="16.5" r="10" fill="none" stroke="#333" stroke-width="2.6"/><path d="M12 1.5 h8 M16 2 v4 M23 6 l3 -3" stroke="#333" stroke-width="2.4"/><path d="M16 17 l4 -5" stroke="#333" stroke-width="2.4"/><path d="M1 13 h5 M0 17 h5 M2 21 h5" stroke="#333" stroke-width="1.6"/></svg>
<svg style="left:15px;top:334px;" width="30" height="31" viewBox="0 0 30 31"><circle cx="14.5" cy="14.5" r="14.5" fill="#333"/><path d="M20 24 l8 7 l-2 -10z" fill="#333"/><g fill="none" stroke="#f8f8f8" stroke-width="2.2"><path d="M14.5 5 l8 4.5 v9.5 l-8 4.5 l-8 -4.5 v-9.5z"/><circle cx="14.5" cy="14.5" r="3.2"/></g></svg>
<svg style="left:18px;top:389px;" width="25" height="27" viewBox="0 0 25 27"><rect x="1.5" y="1.5" width="22" height="24" rx="2" fill="none" stroke="#333" stroke-width="2.6"/><path d="M5 7 l2 2 l3 -4 M5 13 l2 2 l3 -4 M5 19 l2 2 l3 -4" fill="none" stroke="#333" stroke-width="1.5"/><path d="M12 8 h8 M12 14 h8 M12 20 h8" stroke="#333" stroke-width="3"/></svg>
<svg style="left:17px;top:1405px;" width="27" height="25" viewBox="0 0 27 25"><path d="M0 2 h26 v8 h-10 q-5 -3 -10 2 v2 h-6z" fill="#333"/><circle cx="12" cy="15" r="5.5" fill="none" stroke="#333" stroke-width="2.6"/><path d="M16 19 l6 6" stroke="#333" stroke-width="3"/></svg>
<div class="a" style="left:369px;top:115px;width:330px;height:863px;background:#fff;box-shadow:2px 6px 10px rgba(0,0,0,0.18)"></div>
<div class="a" style="left:378px;top:126px;width:1.3px;height:27px;background:#222"></div>
<div class="t" style="left:379.0px;top:131.2px;font-size:19.3px;font-weight:700;color:#333;font-style:normal;letter-spacing:0.1px">70T 5M Belt - 350mm</div>
<div class="a" style="left:615px;top:119px;width:42px;height:42px;background:#0a9a16"></div>
<svg style="left:622px;top:128px;" width="28" height="22" viewBox="0 0 28 22"><path d="M3 11 l7 7 l15 -15" fill="none" stroke="#fff" stroke-width="4.2"/></svg>
<svg style="left:669px;top:132px;" width="18" height="18" viewBox="0 0 18 18"><path d="M2 2 L16 16 M16 2 L2 16" stroke="#c9283e" stroke-width="3.8"/></svg>
<div class="a" style="left:369px;top:160.5px;width:330px;height:1.5px;background:#dedede"></div>
<div class="t" style="left:432.0px;top:173.3px;font-size:17px;font-weight:700;color:#1f55b0;font-style:normal;letter-spacing:0.3px">Belt</div>
<div class="t" style="left:591.0px;top:173.9px;font-size:16.8px;font-weight:400;color:#333;font-style:normal;">Chain</div>
<div class="a" style="left:369px;top:200px;width:330px;height:1.5px;background:#dedede"></div>
<div class="a" style="left:369px;top:198px;width:159px;height:3px;background:#1f55b0"></div>
<div class="t" style="left:377.0px;top:220.0px;font-size:16.5px;font-weight:400;color:#666;font-style:normal;">Pitch</div>
<div class="t" style="left:433.0px;top:214.3px;font-size:20.2px;font-weight:400;color:#333;font-style:normal;">HTD 5mm</div>
<svg style="left:639px;top:219px;" width="13" height="7" viewBox="0 0 13 7"><path d="M0 0 h13 l-6.5 7z" fill="#333"/></svg>
<div class="a" style="left:424px;top:242px;width:236px;height:1.5px;background:#d6d6d6"></div>
<svg style="left:375px;top:258px;" width="18" height="18" viewBox="0 0 18 18"><rect x="0.75" y="0.75" width="16.5" height="16.5" rx="3.5" fill="#fff" stroke="#8a8a8a" stroke-width="1.3"/></svg>
<div class="t" style="left:399.0px;top:257.6px;font-size:19.5px;font-weight:400;color:#555;font-style:normal;">Double-Sided</div>
<div class="t" style="left:377.0px;top:303.0px;font-size:16.5px;font-weight:400;color:#666;font-style:normal;">Width</div>
<div class="t" style="left:585.0px;top:301.1px;font-size:19.5px;font-weight:400;color:#333;font-style:normal;">0.354 in</div>
<div class="a" style="left:430px;top:325px;width:230px;height:1.5px;background:#d6d6d6"></div>
<svg style="left:375px;top:338px;" width="18" height="18" viewBox="0 0 18 18"><rect x="0.75" y="0.75" width="16.5" height="16.5" rx="3.5" fill="#fff" stroke="#8a8a8a" stroke-width="1.3"/></svg>
<div class="t" style="left:399.0px;top:337.6px;font-size:19.5px;font-weight:400;color:#555;font-style:normal;">Generate Teeth/Links</div>
<div class="a" style="left:374px;top:374px;width:321px;height:64px;border:1.3px solid #e2e2e2;border-radius:4px;background:#fff"></div>
<div class="t" style="left:383.0px;top:384.4px;font-size:14.8px;font-weight:400;color:#666;font-style:normal;">Reference Plane</div>
<div class="t" style="left:384.0px;top:411.1px;font-size:19.5px;font-weight:400;color:#555;font-style:normal;">Mate connector</div>
<svg style="left:634px;top:412px;" width="21" height="21" viewBox="0 0 21 21"><circle cx="10.5" cy="10.5" r="9.5" fill="none" stroke="#666" stroke-width="1.3"/><circle cx="10.5" cy="10.5" r="6.5" fill="none" stroke="#666" stroke-width="1.3"/><path d="M10.5 4 v6.5 h6.5" fill="none" stroke="#666" stroke-width="1.3"/></svg>
<svg style="left:665px;top:417px;" width="11" height="11" viewBox="0 0 11 11"><path d="M1 1 L10 10 M10 1 L1 10" stroke="#555" stroke-width="1.6"/></svg>
<div class="a" style="left:374px;top:446px;width:321px;height:442px;background:#dcedf9;border:1.5px solid #2c5286;border-radius:4px"></div>
<div class="t" style="left:383.0px;top:456.4px;font-size:14.8px;font-weight:400;color:#4b5560;font-style:normal;">Guides (Clockwise Order)</div>
<svg style="left:663px;top:459px;" width="16" height="20" viewBox="0 0 16 20"><path d="M4 19 v-16 M0.5 6 l3.5 -5 l3.5 5 M12 1 v16 M8.5 13 l3.5 5 l3.5 -5" fill="none" stroke="#7a8896" stroke-width="1.8"/></svg>
<svg style="left:390px;top:493px;" width="18" height="10" viewBox="0 0 18 10"><path d="M2 2 l7 7 l7 -7" fill="none" stroke="#4d5862" stroke-width="2.6"/></svg>
<div class="t" style="left:413.0px;top:489.6px;font-size:19.5px;font-weight:400;color:#4a525b;font-style:normal;">Edge of Layout Sketch</div>
<svg style="left:665px;top:495px;" width="11" height="11" viewBox="0 0 11 11"><path d="M1 1 L10 10 M10 1 L1 10" stroke="#4a525b" stroke-width="1.6"/></svg>
<div class="a" style="left:403px;top:524px;width:286px;height:64px;background:#fff;border:1px solid #e6eaee"></div>
<div class="t" style="left:412.0px;top:535.5px;font-size:14.5px;font-weight:400;color:#555;font-style:normal;">Circle</div>
<div class="t" style="left:413.0px;top:560.6px;font-size:19.5px;font-weight:400;color:#555;font-style:normal;">Edge of Layout Sketch</div>
<svg style="left:660px;top:566px;" width="11" height="11" viewBox="0 0 11 11"><path d="M1 1 L10 10 M10 1 L1 10" stroke="#555" stroke-width="1.6"/></svg>
<svg style="left:405px;top:608px;" width="18" height="18" viewBox="0 0 18 18"><rect x="0" y="0" width="18" height="18" rx="3.5" fill="#1f4fab"/><path d="M4 9.5 l3.5 3.5 l6.5 -7.5" fill="none" stroke="#fff" stroke-width="2.8"/></svg>
<div class="t" style="left:429.0px;top:608.1px;font-size:19.4px;font-weight:400;color:#555e66;font-style:normal;">Inside / Outside</div>
<svg style="left:405px;top:649px;" width="18" height="18" viewBox="0 0 18 18"><rect x="0" y="0" width="18" height="18" rx="3.5" fill="#1f4fab"/><path d="M4 9.5 l3.5 3.5 l6.5 -7.5" fill="none" stroke="#fff" stroke-width="2.8"/></svg>
<div class="t" style="left:429.0px;top:649.1px;font-size:19.6px;font-weight:400;color:#555e66;font-style:normal;">Toothed / Round</div>
<svg style="left:390px;top:699px;" width="18" height="10" viewBox="0 0 18 10"><path d="M2 2 l7 7 l7 -7" fill="none" stroke="#4d5862" stroke-width="2.6"/></svg>
<div class="t" style="left:413.0px;top:695.6px;font-size:19.5px;font-weight:400;color:#4a525b;font-style:normal;">Edge of Layout Sketch</div>
<svg style="left:665px;top:701px;" width="11" height="11" viewBox="0 0 11 11"><path d="M1 1 L10 10 M10 1 L1 10" stroke="#4a525b" stroke-width="1.6"/></svg>
<div class="a" style="left:403px;top:730px;width:286px;height:64px;background:#fff;border:1px solid #e6eaee"></div>
<div class="t" style="left:412.0px;top:741.5px;font-size:14.5px;font-weight:400;color:#555;font-style:normal;">Circle</div>
<div class="t" style="left:413.0px;top:766.6px;font-size:19.5px;font-weight:400;color:#555;font-style:normal;">Edge of Layout Sketch</div>
<svg style="left:660px;top:772px;" width="11" height="11" viewBox="0 0 11 11"><path d="M1 1 L10 10 M10 1 L1 10" stroke="#555" stroke-width="1.6"/></svg>
<svg style="left:405px;top:814px;" width="18" height="18" viewBox="0 0 18 18"><rect x="0" y="0" width="18" height="18" rx="3.5" fill="#1f4fab"/><path d="M4 9.5 l3.5 3.5 l6.5 -7.5" fill="none" stroke="#fff" stroke-width="2.8"/></svg>
<div class="t" style="left:429.0px;top:814.1px;font-size:19.4px;font-weight:400;color:#555e66;font-style:normal;">Inside / Outside</div>
<svg style="left:405px;top:855px;" width="18" height="18" viewBox="0 0 18 18"><rect x="0" y="0" width="18" height="18" rx="3.5" fill="#1f4fab"/><path d="M4 9.5 l3.5 3.5 l6.5 -7.5" fill="none" stroke="#fff" stroke-width="2.8"/></svg>
<div class="t" style="left:429.0px;top:855.1px;font-size:19.6px;font-weight:400;color:#555e66;font-style:normal;">Toothed / Round</div>
<div class="a" style="left:375px;top:681px;width:319px;height:1.5px;background:#b3cce3"></div>
<svg style="left:375px;top:907px;" width="18" height="18" viewBox="0 0 18 18"><rect x="0.75" y="0.75" width="16.5" height="16.5" rx="3.5" fill="#fff" stroke="#8a8a8a" stroke-width="1.3"/></svg>
<div class="t" style="left:399.0px;top:907.6px;font-size:19.6px;font-weight:400;color:#555;font-style:normal;">Mate Connectors</div>
<div class="a" style="left:380px;top:957px;width:168px;height:3.5px;background:#777;border-radius:2px"></div>
<div class="a" style="left:487px;top:950px;width:18px;height:18px;background:#fff;border:1.3px solid #aaa;border-radius:50%;box-shadow:0 1px 3px rgba(0,0,0,0.3)"></div>
<div class="a" style="left:587px;top:941px;width:73px;height:33px;background:#fff;border:1.3px solid #aaa;border-radius:6px"></div>
<div class="t" style="left:603.0px;top:950.3px;font-size:17px;font-weight:400;color:#333;font-style:normal;">Final</div>
<div class="a" style="left:0px;top:0px;width:2558px;height:60px;background:#e9e9e9"></div>
<svg style="left:20px;top:9px;" width="37" height="42" viewBox="0 0 37 42"><g fill="none" stroke="#5cbf45" stroke-width="5.2" stroke-linejoin="miter"><polygon points="18.3,2.6 33.8,11.6 33.8,29.6 18.3,38.6 2.8,29.6 2.8,11.6"/></g><g stroke="#e9e9e9" stroke-width="2.4"><path d="M20.5,1 L24,7"/><path d="M0,23 L6,21.5"/><path d="M30,36 L27,30"/></g><g fill="none" stroke="#666" stroke-width="2.4"><polygon points="18.3,12 25.5,16.2 25.5,25 18.3,29.2 11,25 11,16.2"/></g><g stroke="#e9e9e9" stroke-width="1.8"><path d="M19.5,10 L21.5,14.5"/><path d="M9,22 L13,21"/><path d="M23.5,28 L22,24"/></g></svg>
<div class="t" style="left:71.0px;top:12.4px;font-size:33.4px;font-weight:400;color:#666;font-style:normal;letter-spacing:0px">onshape</div>
<div class="a" style="left:221px;top:21px;width:24px;height:4px;background:#333"></div>
<div class="a" style="left:221px;top:30px;width:24px;height:4px;background:#333"></div>
<div class="a" style="left:221px;top:39px;width:24px;height:4px;background:#333"></div>
<div class="t" style="left:261.0px;top:14.9px;font-size:33.5px;font-weight:700;color:#333;font-style:normal;letter-spacing:-0.77px">1C - Practice Exercise Solutions</div>
<div class="t" style="left:762.0px;top:22.9px;font-size:23.1px;font-weight:400;color:#8f8f8f;font-style:normal;">FRCDesignLib Rework</div>
<svg style="left:1017px;top:20px;" width="24" height="24" viewBox="0 0 24 24"><g fill="none" stroke="#333" stroke-width="2.6" stroke-linecap="round"><path d="M10 14 L14 10"/><path d="M8.5 11 L5 14.5 a3.5 3.5 0 0 0 5 5 L13.5 16"/><path d="M10.5 8 L14 4.5 a3.5 3.5 0 0 1 5 5 L15.5 13"/></g></svg>
<svg style="left:1054px;top:21px;" width="28" height="22" viewBox="0 0 28 22"><path d="M1 2 h9 l3 3 h13 v16 h-25z" fill="none" stroke="#888" stroke-width="2"/></svg>
<div class="t" style="left:1089.0px;top:21.1px;font-size:22.6px;font-weight:400;color:#8a8a8a;font-style:normal;">Stage 1</div>
<svg style="left:1245px;top:19px;" width="27" height="24" viewBox="0 0 27 24"><path d="M0 9 L13.5 2 L27 9 L13.5 16 Z" fill="#1f5db8"/><path d="M6 13 v6 q7.5 4 15 0 v-6 l-7.5 4z" fill="#1f5db8"/><path d="M2 9 v9" stroke="#1f5db8" stroke-width="2"/></svg>
<svg style="left:1284px;top:17px;" width="28" height="28" viewBox="0 0 28 28"><circle cx="14" cy="14" r="12.8" fill="none" stroke="#333" stroke-width="2.2"/><path d="M6 5.5 q4 -3 9 -3.5 q1 2 -1 3 q2 1 3 -1 q2 1 1 3 q-3 1 -3 3 q-2 1 -4 0 q-1 2 1 4 q-2 1 -4 -1 q-2 -2 -4 -2 q0 -3 2 -5.5z" fill="#333"/><path d="M14 15 q3 -1 6 1 q1 2 3 2 q-1 4 -4 7 q-1 -2 -2 -4 q-3 -2 -3 -6z" fill="#333"/></svg>
<svg style="left:1327px;top:17px;" width="27" height="24" viewBox="0 0 27 24"><g fill="none" stroke="#333" stroke-width="2.4"><path d="M2 3 h8 v18 h-8z"/><path d="M8 8 h10 l6 6 v9 h-16z"/></g></svg>
<div class="t" style="left:1363.0px;top:21.6px;font-size:21.6px;font-weight:400;color:#333;font-style:normal;">451</div>
<svg style="left:1428px;top:15px;" width="10" height="30" viewBox="0 0 10 30"><g fill="#333"><circle cx="5" cy="2" r="1.5"/><circle cx="5" cy="6" r="1.5"/><circle cx="5" cy="14.5" r="4.5"/><circle cx="5" cy="23" r="1.5"/><circle cx="5" cy="27" r="1.5"/></g></svg>
<div class="t" style="left:1457.0px;top:21.6px;font-size:21.6px;font-weight:400;color:#333;font-style:normal;">4094</div>
<svg style="left:1527px;top:16px;" width="27" height="27" viewBox="0 0 27 27"><path d="M1 11 h6 v15 h-6z M9 11 l6 -10 q4 0 3 5 l-1 4 h7 q3 1 2 4 l-2 9 q-1 3 -4 3 h-11z" fill="#1f5db8"/></svg>
<div class="t" style="left:1563.0px;top:21.6px;font-size:21.6px;font-weight:400;color:#333;font-style:normal;">3</div>
<svg style="left:2027px;top:18px;" width="30" height="30" viewBox="0 0 30 30"><g fill="none" stroke="#333" stroke-width="2.6"><path d="M7 2 q-4 0 -4 4 v6 l-3 3 l3 3 v6 q0 4 4 4"/><path d="M23 2 q4 0 4 4 v6 l3 3 l-3 3 v6 q0 4 -4 4"/><path d="M9 15 l4 4 l8 -8"/></g></svg>
<svg style="left:2077px;top:20px;" width="36" height="28" viewBox="0 0 36 28"><path d="M3 24 q4 -3 4 -9 q0 -9 8 -10 q8 1 8 10 q0 6 4 9z M12 25 q3 4 6 0z" fill="#333"/></svg>
<div class="a" style="left:2090px;top:9px;width:25px;height:24px;background:#1558b3;border-radius:4px"></div>
<div class="t" style="left:2096.0px;top:12.8px;font-size:17px;font-weight:700;color:#fff;font-style:normal;">2</div>
<svg style="left:2126px;top:19px;" width="26" height="28" viewBox="0 0 26 28"><g fill="none" stroke="#333" stroke-width="2.4"><rect x="1.5" y="1.5" width="22" height="25" rx="1.5"/><path d="M5 7 l2 2 l3 -4 M5 13 l2 2 l3 -4 M5 19 l2 2 l3 -4"/><path d="M12 8 h8 M12 14 h8 M12 20 h8" stroke-width="3"/></g></svg>
<svg style="left:2172px;top:19px;" width="30" height="28" viewBox="0 0 30 28"><g fill="none" stroke="#333" stroke-width="2.6"><rect x="1.5" y="2" width="10" height="10"/><rect x="1.5" y="16" width="10" height="10"/><rect x="16" y="16" width="10" height="10"/><path d="M21 1 v13 M14.5 7.5 h13"/></g></svg>
<svg style="left:2222px;top:19px;" width="26" height="29" viewBox="0 0 26 29"><path d="M12 1 q11 0 12 11 l2 5 h-3 v6 q0 3 -3 3 h-4 v3 h-13 v-8 q-4 -4 -3 -10 q2 -10 12 -10z" fill="#333"/><circle cx="10" cy="12" r="3.5" fill="none" stroke="#e9e9e9" stroke-width="2"/><circle cx="17" cy="8" r="2.5" fill="none" stroke="#e9e9e9" stroke-width="1.6"/></svg>
<div class="a" style="left:2264px;top:4px;width:88px;height:49px;background:#1558b3;border-radius:7px"></div>
<div class="t" style="left:2281.0px;top:20.1px;font-size:19.4px;font-weight:700;color:#fff;font-style:normal;">Share</div>
<svg style="left:2368px;top:19px;" width="28" height="28" viewBox="0 0 28 28"><circle cx="14" cy="14" r="13.5" fill="#333"/><path d="M9.5 10.5 q0 -5 4.5 -5 q5 0 5 4.5 q0 3 -3.5 4.5 q-1.5 1 -1.5 3" fill="none" stroke="#fff" stroke-width="3"/><circle cx="14" cy="22" r="2" fill="#fff"/></svg>
<svg style="left:2405px;top:29px;" width="13" height="7" viewBox="0 0 13 7"><path d="M0 0 h13 l-6.5 7z" fill="#333"/></svg>
<svg style="left:2437px;top:15px;" width="36" height="36" viewBox="0 0 36 36"><defs><clipPath id="av"><rect width="36" height="36" rx="3"/></clipPath></defs><g clip-path="url(#av)"><rect width="36" height="36" fill="#d8c2ad"/><path d="M28 0 h8 v36 h-12z" fill="#a9aaac"/><path d="M2 22 l28 -10 l2 4 l-28 12z" fill="#7a6550"/><path d="M4 28 l28 -12 l-1 6 l-24 10z" fill="#b8a58f"/><ellipse cx="15" cy="20" rx="3" ry="2.2" fill="#1e90d8"/><ellipse cx="25" cy="15" rx="3" ry="2.2" fill="#1e90d8"/><circle cx="10" cy="27" r="1.5" fill="#3a2a1a"/><circle cx="22" cy="22" r="1.2" fill="#3a2a1a"/></g></svg>
<div class="t" style="left:2481.0px;top:21.5px;font-size:21.7px;font-weight:400;color:#333;font-style:normal;">Kelly</div>
<svg style="left:2538px;top:27px;" width="13" height="7" viewBox="0 0 13 7"><path d="M0 0 h13 l-6.5 7z" fill="#333"/></svg>
<div class="a" style="left:60px;top:60px;width:2498px;height:55px;background:#fff"></div>
<svg style="left:72px;top:74px;" width="26" height="27" viewBox="0 0 26 27"><path d="M3 11 L11 3 v5 q12 0 12 14 q-4 -7 -12 -7 v5z" fill="#8c8c8c"/></svg>
<svg style="left:124px;top:74px;" width="26" height="27" viewBox="0 0 26 27"><path d="M23 11 L15 3 v5 q-12 0 -12 14 q4 -7 12 -7 v5z" fill="#8c8c8c"/></svg>
<div class="a" style="left:165px;top:68px;width:3px;height:38px;background:#d5d5d5"></div>
<svg style="left:309px;top:74px;" width="26" height="27" viewBox="0 0 26 27"><g fill="#fff" stroke="#333" stroke-width="2" stroke-linejoin="round"><path d="M1 5 l4 -4 h16 l4 4 v21 h-20 l-4 -4z"/><path d="M5 26 v-21 h20 M5 5 l-4 -4"/></g><path d="M9 13 l3 -3 h12 v16 h-15z" fill="#8c8c8c" stroke="#333" stroke-width="1.5"/></svg>
<svg style="left:360px;top:74px;" width="26" height="27" viewBox="0 0 26 27"><path d="M20 5 a11 11 0 1 0 0 17 q-4 -2 -3 -4 q-6 1 -6 -4.5 q0 -5 6 -4.5 q-1 -2 3 -4z" fill="#8c8c8c" stroke="#333" stroke-width="1.8"/><path d="M3 13.5 h22" stroke="#333" stroke-width="1.4" stroke-dasharray="2 2"/></svg>
<svg style="left:411px;top:74px;" width="26" height="27" viewBox="0 0 26 27"><path d="M3 22 q0 -10 8 -11 q6 0 7 -3 v-4 a4 2.5 0 0 1 8 0 v4 q-1 10 -9 10 q-5 0 -7 4 q-1 5 -4 5 q-3 0 -3 -5z" fill="#8c8c8c" stroke="#333" stroke-width="1.8"/><ellipse cx="22" cy="4" rx="4" ry="2.5" fill="#fff" stroke="#333" stroke-width="1.5"/></svg>
<svg style="left:462px;top:74px;" width="26" height="27" viewBox="0 0 26 27"><path d="M6 4 q7 -4 14 0 l5 19 l-12 4 l-12 -4z" fill="#8c8c8c" stroke="#333" stroke-width="1.8"/><ellipse cx="13" cy="4" rx="7" ry="2.5" fill="#fff" stroke="#333" stroke-width="1.5"/></svg>
<div class="a" style="left:502px;top:68px;width:3px;height:38px;background:#d5d5d5"></div>
<svg style="left:518px;top:74px;" width="26" height="27" viewBox="0 0 26 27"><path d="M1 26 v-14 q0 -10 10 -11 h10 l4 4 v21 z" fill="#fff" stroke="#333" stroke-width="2"/><path d="M2 12 q0 -8 9 -10 l3 3 q-8 2 -9 10z" fill="#8c8c8c"/></svg>
<svg style="left:561px;top:83px;" width="16" height="10" viewBox="0 0 16 10"><path d="M2 2 l6 6 l6 -6" fill="none" stroke="#333" stroke-width="2.6"/></svg>
<svg style="left:597px;top:74px;" width="26" height="27" viewBox="0 0 26 27"><path d="M1 22 v-9 l11 -12 h9 l4 4 v21 h-20z" fill="#fff" stroke="#333" stroke-width="2"/><path d="M2 13 l10 -11 l3 3 l-10 11z" fill="#8c8c8c"/></svg>
<svg style="left:648px;top:74px;" width="26" height="27" viewBox="0 0 26 27"><g fill="#fff" stroke="#333" stroke-width="2" stroke-linejoin="round"><path d="M1 5 l4 -4 h16 l4 4 v21 h-20 l-4 -4z"/><path d="M5 26 v-21 h20 M5 5 l-4 -4"/></g><circle cx="15" cy="16" r="7.5" fill="#8c8c8c" stroke="#333" stroke-width="1.5"/><circle cx="14" cy="14.5" r="3" fill="#ccc"/></svg>
<div class="a" style="left:689px;top:68px;width:3px;height:38px;background:#d5d5d5"></div>
<svg style="left:705px;top:74px;" width="26" height="27" viewBox="0 0 26 27"><g stroke="#333" stroke-width="1.6"><rect x="1" y="2" width="12" height="12" fill="#fff"/><rect x="13" y="2" width="12" height="12" fill="#8c8c8c"/><rect x="1" y="14" width="12" height="12" fill="#8c8c8c"/><rect x="13" y="14" width="12" height="12" fill="#8c8c8c"/></g></svg>
<svg style="left:756px;top:74px;" width="26" height="27" viewBox="0 0 26 27"><g stroke="#333" stroke-width="1.3"><circle cx="9.5" cy="4.8" r="3" fill="#fff"/><circle cx="13" cy="5.6" r="3" fill="#fff"/><circle cx="19.5" cy="10.2" r="3" fill="#8c8c8c"/><circle cx="23.4" cy="11.7" r="3" fill="#8c8c8c"/><circle cx="3" cy="12.5" r="3" fill="#8c8c8c"/><circle cx="6.5" cy="14" r="3" fill="#8c8c8c"/><circle cx="13" cy="17.5" r="3" fill="#8c8c8c"/><circle cx="17" cy="19" r="3" fill="#8c8c8c"/></g><path d="M1 9 l2 1 M11 10 l2 1 M22 17 l2 1" stroke="#333" stroke-width="1"/></svg>
<svg style="left:807px;top:74px;" width="26" height="27" viewBox="0 0 26 27"><g stroke="#333" stroke-width="1.6" stroke-linejoin="round"><path d="M1 3 l3 -3 h3 l3 3 v20 l-3 3 h-3 l-3 -3z" fill="#fff"/><path d="M4 0 v23 h6 M4 23 l-3 3" fill="none"/><path d="M7 6 v10 l3 3" fill="none" stroke-width="1.2"/><path d="M16 3 l3 -3 h4 l3 3 v23 h-7 l-3 -3z" fill="#8c8c8c"/><path d="M19 0 v10 l-3 3" fill="none" stroke-width="1.2"/></g><path d="M10 2 l6 20" stroke="#ccc" stroke-width="3"/></svg>
<div class="a" style="left:847px;top:68px;width:3px;height:38px;background:#d5d5d5"></div>
<svg style="left:863px;top:74px;" width="26" height="27" viewBox="0 0 26 27"><g stroke="#333" stroke-width="1.8" stroke-linejoin="round" fill="#fff"><path d="M1 14 l4 -3 h8 v-8 l3 -3 h7 l3 3 v22 l-3 3 h-19 l-3 -3z"/><path d="M5 11 v11 h18 v-22 M1 26 l4 -4 M23 22 l3 3 M5 11 h8 l3 3 h7" fill="none"/></g><path d="M0 2 q9 -2 11 7" fill="none" stroke="#333" stroke-width="1.8"/><path d="M6 8 l5 5 l4 -6z" fill="#333"/></svg>
<svg style="left:914px;top:74px;" width="26" height="27" viewBox="0 0 26 27"><g transform="translate(7,-1) scale(0.58)"><g stroke="#333" stroke-width="1.8" stroke-linejoin="round"><polygon points="13,2 24,8 13,14 2,8" fill="#fff"/><polygon points="2,8 13,14 13,26 2,20" fill="#fff"/><polygon points="13,14 24,8 24,20 13,26" fill="#fff"/></g></g><g transform="translate(-1,12) scale(0.58)"><g stroke="#333" stroke-width="1.8" stroke-linejoin="round"><polygon points="13,2 24,8 13,14 2,8" fill="#fff"/><polygon points="2,8 13,14 13,26 2,20" fill="#fff"/><polygon points="13,14 24,8 24,20 13,26" fill="#fff"/></g></g><g transform="translate(14,12) scale(0.58)"><g stroke="#333" stroke-width="1.8" stroke-linejoin="round"><polygon points="13,2 24,8 13,14 2,8" fill="#fff"/><polygon points="2,8 13,14 13,26 2,20" fill="#fff"/><polygon points="13,14 24,8 24,20 13,26" fill="#fff"/></g></g></svg>
<svg style="left:965px;top:74px;" width="26" height="27" viewBox="0 0 26 27"><circle cx="9" cy="13.5" r="8" fill="#fff" stroke="#333" stroke-width="1.8"/><circle cx="17" cy="13.5" r="8" fill="#8c8c8c" stroke="#333" stroke-width="1.8"/><path d="M13 6.5 a8 8 0 0 1 0 14 a8 8 0 0 1 0 -14z" fill="#8c8c8c" stroke="#333" stroke-width="1.2"/></svg>
<svg style="left:1016px;top:74px;" width="26" height="27" viewBox="0 0 26 27"><circle cx="13" cy="13.5" r="12" fill="#fff" stroke="#333" stroke-width="1.8"/><path d="M13 4.5 a9 9 0 0 1 9 9 h-9z" fill="#e6e6e6"/><circle cx="13" cy="13.5" r="9" fill="none" stroke="#333" stroke-width="1.4"/><path d="M13 4.5 v9 h9" fill="none" stroke="#333" stroke-width="1.8"/></svg>
<svg style="left:1067px;top:74px;" width="26" height="27" viewBox="0 0 26 27"><text x="0" y="21" font-family="Liberation Sans" font-weight="700" font-size="22" fill="#333">(</text><text x="6" y="20" font-family="Liberation Serif" font-style="italic" font-weight="700" font-size="24" fill="#333">x</text><text x="19" y="21" font-family="Liberation Sans" font-weight="700" font-size="22" fill="#333">)</text></svg>
<svg style="left:1119px;top:74px;" width="26" height="27" viewBox="0 0 26 27"><path d="M1 1 l24 3 v22 l-24 -3z" fill="#bdbdbd" stroke="#333" stroke-width="1.8"/><path d="M12 2.5 v10 l13 2" fill="none" stroke="#333" stroke-width="1.6"/></svg>
<svg style="left:1170px;top:74px;" width="26" height="27" viewBox="0 0 26 27"><g fill="#fff" stroke="#333" stroke-width="2" stroke-linejoin="round"><path d="M1 5 l4 -4 h16 l4 4 v21 h-20 l-4 -4z"/><path d="M5 26 v-21 h20 M5 5 l-4 -4"/></g><path d="M1 17 q6 -3 12 1 q6 4 12 0" fill="none" stroke="#8c8c8c" stroke-width="2"/></svg>
<svg style="left:1220px;top:74px;" width="26" height="27" viewBox="0 0 26 27"><g transform="translate(0,9) scale(0.7)"><path d="M1 5 l4 -4 h16 l4 4 v21 h-20 l-4 -4z" fill="#fff" stroke="#333" stroke-width="2.5"/></g><path d="M13 1 l7 7 l-7 7 l-7 -7z" fill="#8c8c8c" stroke="#333" stroke-width="1.5" transform="translate(5,0)"/><path d="M8 6 q2 -5 6 -5 M24 18 q0 5 -4 8" fill="none" stroke="#333" stroke-width="1.8"/></svg>
<svg style="left:1263px;top:83px;" width="16" height="10" viewBox="0 0 16 10"><path d="M2 2 l6 6 l6 -6" fill="none" stroke="#333" stroke-width="2.6"/></svg>
<svg style="left:1299px;top:74px;" width="26" height="27" viewBox="0 0 26 27"><path d="M1 3 l3 -3 h13 v20 h-15z" fill="#bdbdbd" stroke="#8c8c8c" stroke-width="1.5"/><circle cx="19" cy="20" r="6.5" fill="#333"/><path d="M16 17 l6 6 m0 -6 l-6 6" stroke="#fff" stroke-width="2"/></svg>
<div class="a" style="left:1339px;top:68px;width:3px;height:38px;background:#d5d5d5"></div>
<svg style="left:1356px;top:74px;" width="26" height="27" viewBox="0 0 26 27"><path d="M1 17 l5 -4 h19 v12 h-24z" fill="#fff" stroke="#333" stroke-width="1.8"/><path d="M1 17 h19 l5 -4 M20 17 v8" fill="none" stroke="#333" stroke-width="1.6"/><path d="M14 1 l-5 6 h3.5 v8 h3 v-8 h3.5z" fill="#333"/></svg>
<svg style="left:1407px;top:74px;" width="26" height="27" viewBox="0 0 26 27"><path d="M1 6 q6 -5 12 -2 q6 3 11 -3 l1 10 q-7 5 -12 2 q-6 -3 -12 2z" fill="#8c8c8c"/><path d="M1 18 l5 -4 h19 v12 h-24z M1 18 h19 l5 -4 M20 18 v8" fill="#fff" stroke="#333" stroke-width="1.8"/></svg>
<svg style="left:1458px;top:74px;" width="26" height="27" viewBox="0 0 26 27"><path d="M1 12 q2 -10 14 -11 q7 0 10 5 l-5 15 q-12 -2 -18 4z" fill="#8c8c8c"/><path d="M12 14 l9 3 l-3 8 q-4 -2 -8 -1z" fill="#fff" stroke="#333" stroke-width="1.4"/><path d="M9 8 l7 2 l-2 2 l4 4 l-2 2 l-4 -4 l-2 2z" fill="#333"/></svg>
<svg style="left:1509px;top:74px;" width="26" height="27" viewBox="0 0 26 27"><path d="M1 6 q6 -5 12 -3 q6 2 11 -2 v14 q-7 4 -12 2 q-6 -3 -11 1z" fill="#8c8c8c"/><circle cx="19" cy="20" r="6.5" fill="#333"/><path d="M16 17 l6 6 m0 -6 l-6 6" stroke="#fff" stroke-width="2"/></svg>
<div class="a" style="left:1549px;top:68px;width:3px;height:38px;background:#d5d5d5"></div>
<svg style="left:1566px;top:74px;" width="26" height="27" viewBox="0 0 26 27"><g stroke="#333" stroke-width="2" stroke-linejoin="round"><polygon points="13,2 24,8 13,14 2,8" fill="#f0f0f0"/><polygon points="2,8 13,14 13,26 2,20" fill="#e0e0e0"/><polygon points="13,14 24,8 24,20 13,26" fill="#d0d0d0"/></g></svg>
<svg style="left:1617px;top:74px;" width="26" height="27" viewBox="0 0 26 27"><path d="M1 4 l3 -3 h19 l3 3 v22 h-22 l-3 -3z" fill="#ddd" stroke="#8c8c8c" stroke-width="1.4"/><rect x="5" y="5" width="21" height="21" fill="#8c8c8c" stroke="#666" stroke-width="1.2"/><path d="M5 15 h21 M15 5 v21" stroke="#666" stroke-width="1.2"/></svg>
<svg style="left:1668px;top:74px;" width="26" height="27" viewBox="0 0 26 27"><path d="M1 4 l9 -3 h15 v22 l-9 3 h-15z" fill="#fff" stroke="#333" stroke-width="2.4"/><path d="M1 4 h15 l9 -3 M16 4 v22" fill="none" stroke="#333" stroke-width="2.2"/><g fill="#333"><ellipse cx="5" cy="10" rx="1.8" ry="2.5"/><ellipse cx="11" cy="10" rx="1.8" ry="2.5"/><ellipse cx="5" cy="19" rx="1.8" ry="2.5"/><ellipse cx="11" cy="19" rx="1.8" ry="2.5"/></g><path d="M18 8 l5 -2 v15 l-5 2z" fill="#8c8c8c" stroke="#333" stroke-width="1.4"/></svg>
<svg style="left:1719px;top:74px;" width="26" height="27" viewBox="0 0 26 27"><path d="M13 1 l12 5 v13 l-12 7 l-12 -7 v-13z" fill="#aaa" stroke="#999" stroke-width="1"/><path d="M1 6 l12 6 l12 -6" fill="#ccc"/><ellipse cx="13" cy="7" rx="4" ry="2.5" fill="#777"/></svg>
<svg style="left:1770px;top:74px;" width="26" height="27" viewBox="0 0 26 27"><g><path d="M8 1 q-2 2 0 4 M18 1 q2 2 0 4 M6 0 q-3 3 0 6 M20 0 q3 3 0 6" fill="none" stroke="#333" stroke-width="1"/><circle cx="13" cy="3" r="2" fill="#333"/><path d="M13 3 v5" stroke="#333" stroke-width="1.5"/><path d="M2 9 l22 -1 l1 4 h1 v5 h-1 l-1 8 l-22 1 l-1 -4 h-1 v-6 h1z" fill="#333"/><circle cx="8" cy="14" r="3.5" fill="#fff"/><circle cx="17" cy="14" r="3.5" fill="#fff"/><circle cx="8.5" cy="14.5" r="1.5" fill="#333"/><circle cx="17.5" cy="14.5" r="1.5" fill="#333"/><path d="M10 20 q3 2 6 -1" stroke="#fff" stroke-width="1.4" fill="none"/></g></svg>
<svg style="left:1821px;top:74px;" width="26" height="27" viewBox="0 0 26 27"><g><path d="M8 1 q-2 2 0 4 M18 1 q2 2 0 4 M6 0 q-3 3 0 6 M20 0 q3 3 0 6" fill="none" stroke="#333" stroke-width="1"/><circle cx="13" cy="3" r="2" fill="#333"/><path d="M13 3 v5" stroke="#333" stroke-width="1.5"/><path d="M2 9 l22 -1 l1 4 h1 v5 h-1 l-1 8 l-22 1 l-1 -4 h-1 v-6 h1z" fill="#333"/><circle cx="8" cy="14" r="3.5" fill="#fff"/><circle cx="17" cy="14" r="3.5" fill="#fff"/><circle cx="8.5" cy="14.5" r="1.5" fill="#333"/><circle cx="17.5" cy="14.5" r="1.5" fill="#333"/><path d="M10 20 q3 2 6 -1" stroke="#fff" stroke-width="1.4" fill="none"/></g></svg>
<svg style="left:1872px;top:74px;" width="26" height="27" viewBox="0 0 26 27"><path d="M10 2.5 q4 -3.5 8 0 l7 12 q2 5 -3 7 l-15 4 q-6 1 -6.5 -5 q0 -3 1.5 -5.5z" fill="#fff" stroke="#888" stroke-width="1.8"/><circle cx="14" cy="6.5" r="5.2" fill="#9c9c9c" stroke="#777" stroke-width="1"/><circle cx="7" cy="19.5" r="6" fill="#9c9c9c" stroke="#777" stroke-width="1"/><circle cx="22" cy="18" r="3.4" fill="#9c9c9c" stroke="#777" stroke-width="1"/></svg>
<svg style="left:1923px;top:74px;" width="26" height="27" viewBox="0 0 26 27"><polygon points="22.5,13.5 25.3,15.9 24.5,18.3 20.9,18.8 19.7,20.2 19.9,23.9 17.8,25.0 14.9,22.8 13.0,23.0 10.6,25.8 8.2,25.0 7.7,21.4 6.3,20.2 2.6,20.4 1.5,18.3 3.7,15.4 3.5,13.5 0.7,11.1 1.5,8.7 5.1,8.2 6.3,6.8 6.1,3.1 8.2,2.0 11.1,4.2 13.0,4.0 15.4,1.2 17.8,2.0 18.3,5.6 19.7,6.8 23.4,6.6 24.5,8.7 22.3,11.6" fill="#777" stroke="#333" stroke-width="1.8"/><circle cx="13" cy="13.5" r="4" fill="#fff" stroke="#333" stroke-width="1.6"/></svg>
<svg style="left:1974px;top:74px;" width="26" height="27" viewBox="0 0 26 27"><path d="M1 1 l5 0 q3 4 7 4 q4 0 7 -4 h5 l-3 5 q2 3 2 7 q0 4 -2 7 h5 v6 h-24 v-6 h5 q-2 -3 -2 -7 q0 -4 2 -7z" fill="#666"/><circle cx="13" cy="13" r="5" fill="#fff"/></svg>
<svg style="left:2024px;top:74px;" width="26" height="27" viewBox="0 0 26 27"><g fill="none" stroke="#333" stroke-width="1.5"><circle cx="3" cy="3" r="2"/><circle cx="23" cy="3" r="2"/><circle cx="3" cy="24" r="2"/><circle cx="23" cy="24" r="2"/></g><path d="M15 2 l-7 12 h5 l-3 10 l8 -13 h-5z" fill="none" stroke="#333" stroke-width="1.4"/></svg>
<svg style="left:2075px;top:74px;" width="26" height="27" viewBox="0 0 26 27"><path d="M2 9 l3 -3 l19 11 q3 3 0 5 l-2 1 l-20 -11z" fill="#111"/><path d="M4 8 l4 -2" stroke="#fff" stroke-width="1"/></svg>
<div class="a" style="left:2117px;top:68px;width:3px;height:38px;background:#d5d5d5"></div>
<svg style="left:2132px;top:74px;" width="26" height="27" viewBox="0 0 26 27"><path d="M1 7 q0 -4 4 -5 l16 -2 q4 0 4 4 l1 16 q0 4 -4 4 l-16 2 q-4 0 -4 -4z" fill="#333"/><path d="M3 12 l21 -2 l1 9 q0 2 -2 2 l-17 2 q-2 0 -2 -2z" fill="#fff"/><text x="13" y="8" text-anchor="middle" font-size="6" font-weight="700" fill="#fff" font-family="Liberation Sans">HELLO</text></svg>
<svg style="left:2175px;top:83px;" width="16" height="10" viewBox="0 0 16 10"><path d="M2 2 l6 6 l6 -6" fill="none" stroke="#333" stroke-width="2.6"/></svg>
<svg style="left:181px;top:74px;" width="26" height="27" viewBox="0 0 26 27"><path d="M3 22 l2 -7 l13 -13 l5 5 l-13 13z" fill="none" stroke="#333" stroke-width="2"/><path d="M1 26 h24" stroke="#2f6cc5" stroke-width="1.6"/></svg>
<div class="t" style="left:216.0px;top:78.1px;font-size:20.6px;font-weight:400;color:#333;font-style:normal;">Sketch</div>
<div class="a" style="left:2215px;top:64px;width:240px;height:47px;background:#efefef;border-radius:6px"></div>
<div class="t" style="left:2230.0px;top:78.2px;font-size:20.3px;font-weight:400;color:#333;font-style:normal;">Search tools...</div>
<div class="a" style="left:2365px;top:75px;width:50px;height:27px;background:#fafafa;border:1px solid #bbb;border-bottom:2px solid #aaa;border-radius:3px"></div>
<div class="t" style="left:2369.0px;top:81.3px;font-size:16px;font-weight:400;color:#333;font-style:normal;">alt/⌥</div>
<div class="a" style="left:2416px;top:75px;width:24px;height:27px;background:#fafafa;border:1px solid #bbb;border-bottom:2px solid #aaa;border-radius:3px"></div>
<div class="t" style="left:2423.0px;top:81.8px;font-size:17px;font-weight:400;color:#333;font-style:normal;">c</div>
</body></html>
